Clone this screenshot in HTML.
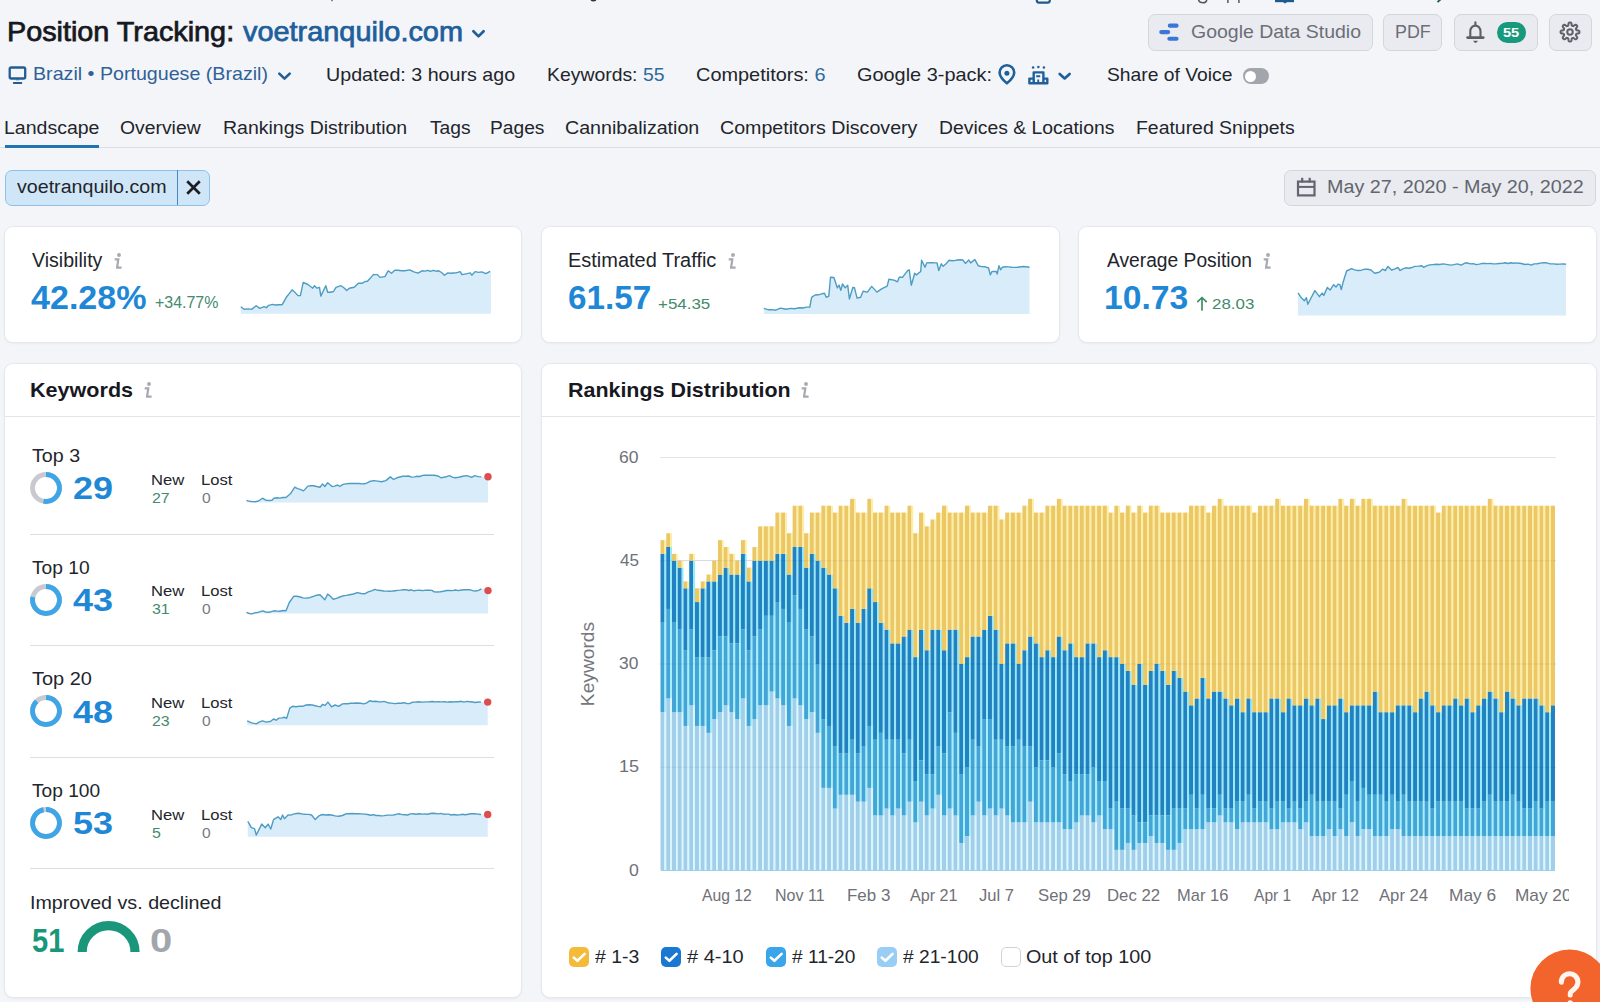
<!DOCTYPE html>
<html><head><meta charset="utf-8"><title>Position Tracking</title>
<style>
html,body{margin:0;padding:0;}
body{width:1600px;height:1002px;overflow:hidden;background:#f4f5f9;position:relative;font-family:"Liberation Sans", sans-serif;}
.t{position:absolute;white-space:nowrap;line-height:1;}
.a{position:absolute;}
.card{position:absolute;background:#fff;border-radius:8px;box-shadow:0 0 0 1px #e6e8ec,0 1px 3px rgba(30,35,50,.10);}
.btn{position:absolute;background:#e9ebf0;border:1px solid #d3d6dd;border-radius:7px;box-sizing:border-box;}
</style></head><body>
<div class="btn" style="left:1148px;top:14px;width:224.5px;height:36.5px;"></div>
<div class="btn" style="left:1383.4px;top:14px;width:59px;height:36.5px;"></div>
<div class="btn" style="left:1453.6px;top:14px;width:84px;height:36.5px;"></div>
<div class="btn" style="left:1548.9px;top:14px;width:43.6px;height:36.5px;"></div>
<div class="a" style="left:0;top:147px;width:1600px;height:1px;background:#dcdee4;"></div>
<div class="a" style="left:4.5px;top:169.5px;width:205px;height:36px;border:1px solid #8fc0e8;border-radius:7px;background:#cfe6f8;box-sizing:border-box;"></div>
<div class="a" style="left:177px;top:170px;width:1.3px;height:35px;background:#4a86bf;"></div>
<div class="btn" style="left:1284px;top:169.5px;width:311.5px;height:36px;"></div>
<div class="card" style="left:4.5px;top:227px;width:516px;height:115px;"></div>
<div class="card" style="left:541.5px;top:227px;width:517px;height:115px;"></div>
<div class="card" style="left:1078.5px;top:227px;width:517px;height:115px;"></div>
<div class="card" style="left:4.5px;top:363.5px;width:516px;height:633px;"></div>
<div class="a" style="left:5px;top:416px;width:515px;height:1px;background:#e3e5ea;"></div>
<div class="a" style="left:30px;top:533.5px;width:464px;height:1.2px;background:#dcdee3;"></div>
<div class="a" style="left:30px;top:645.1px;width:464px;height:1.2px;background:#dcdee3;"></div>
<div class="a" style="left:30px;top:756.7px;width:464px;height:1.2px;background:#dcdee3;"></div>
<div class="a" style="left:30px;top:868.3px;width:464px;height:1.2px;background:#dcdee3;"></div>
<div class="card" style="left:541.5px;top:363.5px;width:1054px;height:633px;"></div>
<div class="a" style="left:542px;top:416px;width:1053px;height:1px;background:#e3e5ea;"></div>
<div class="a" style="left:660px;top:766.7px;width:896px;height:1.2px;background:#e2e4e8;"></div>
<div class="a" style="left:660px;top:663.4px;width:896px;height:1.2px;background:#e2e4e8;"></div>
<div class="a" style="left:660px;top:560.2px;width:896px;height:1.2px;background:#e2e4e8;"></div>
<div class="a" style="left:660px;top:456.9px;width:896px;height:1.2px;background:#e2e4e8;"></div>
<svg class="a" style="left:0;top:0" width="1600" height="1002" viewBox="0 0 1600 1002"><path d="M240.8 306.7 L244.1 309.2 L248.2 308.9 L251.6 309.4 L256.2 305.7 L259.8 308.4 L264.0 306.7 L266.5 307.7 L268.1 305.7 L272.3 304.4 L275.6 305.0 L278.9 304.8 L282.2 304.7 L286.3 297.3 L289.2 293.6 L292.1 289.8 L295.0 292.4 L297.9 295.6 L300.4 295.6 L303.2 282.4 L307.9 284.5 L312.8 288.2 L314.5 285.7 L317.0 288.2 L319.5 287.3 L320.8 296.1 L325.8 285.7 L327.7 292.3 L330.6 292.2 L333.5 291.5 L336.0 287.3 L341.0 285.7 L343.9 287.8 L346.8 290.6 L349.3 288.2 L354.2 287.3 L358.4 283.2 L362.5 283.2 L365.0 281.5 L367.5 281.2 L370.4 278.1 L373.3 274.6 L377.4 274.6 L379.9 277.4 L384.9 276.6 L388.2 270.8 L391.5 273.2 L394.8 270.3 L398.1 270.3 L401.4 270.8 L404.8 270.8 L409.7 269.9 L413.9 271.9 L418.0 273.2 L422.1 270.8 L424.9 271.1 L427.7 270.3 L430.4 271.3 L433.2 270.3 L435.9 271.2 L438.7 270.8 L441.6 272.5 L444.5 275.2 L447.8 272.9 L450.6 273.3 L453.3 273.0 L456.1 272.9 L460.2 271.6 L461.9 274.6 L464.7 274.1 L467.4 273.6 L470.2 272.9 L471.8 275.2 L475.1 271.6 L478.5 272.4 L481.8 271.9 L485.9 273.6 L490.1 271.3 L490.9 271.3 L490.9 313.8 L240.8 313.8 Z" fill="#d9ecfa" stroke="none"/><path d="M240.8 306.7 L244.1 309.2 L248.2 308.9 L251.6 309.4 L256.2 305.7 L259.8 308.4 L264.0 306.7 L266.5 307.7 L268.1 305.7 L272.3 304.4 L275.6 305.0 L278.9 304.8 L282.2 304.7 L286.3 297.3 L289.2 293.6 L292.1 289.8 L295.0 292.4 L297.9 295.6 L300.4 295.6 L303.2 282.4 L307.9 284.5 L312.8 288.2 L314.5 285.7 L317.0 288.2 L319.5 287.3 L320.8 296.1 L325.8 285.7 L327.7 292.3 L330.6 292.2 L333.5 291.5 L336.0 287.3 L341.0 285.7 L343.9 287.8 L346.8 290.6 L349.3 288.2 L354.2 287.3 L358.4 283.2 L362.5 283.2 L365.0 281.5 L367.5 281.2 L370.4 278.1 L373.3 274.6 L377.4 274.6 L379.9 277.4 L384.9 276.6 L388.2 270.8 L391.5 273.2 L394.8 270.3 L398.1 270.3 L401.4 270.8 L404.8 270.8 L409.7 269.9 L413.9 271.9 L418.0 273.2 L422.1 270.8 L424.9 271.1 L427.7 270.3 L430.4 271.3 L433.2 270.3 L435.9 271.2 L438.7 270.8 L441.6 272.5 L444.5 275.2 L447.8 272.9 L450.6 273.3 L453.3 273.0 L456.1 272.9 L460.2 271.6 L461.9 274.6 L464.7 274.1 L467.4 273.6 L470.2 272.9 L471.8 275.2 L475.1 271.6 L478.5 272.4 L481.8 271.9 L485.9 273.6 L490.1 271.3" fill="none" stroke="#4e9cc2" stroke-width="1.4" stroke-linejoin="round"/><path d="M763.8 308.4 L768.6 309.8 L772.0 309.6 L775.5 310.2 L780.6 308.1 L785.8 309.3 L790.9 308.4 L794.4 308.8 L799.5 307.8 L803.0 308.0 L806.4 307.1 L809.8 307.1 L811.6 297.3 L815.0 295.0 L818.4 294.8 L821.9 293.8 L824.5 293.3 L826.2 297.3 L828.8 296.1 L830.5 277.2 L833.9 277.5 L837.3 287.8 L839.1 285.2 L840.8 290.4 L842.5 284.0 L845.1 287.8 L847.7 285.2 L849.4 299.0 L852.8 287.5 L854.5 287.8 L857.1 298.1 L860.6 297.3 L863.1 291.3 L867.4 292.1 L871.7 286.4 L876.9 292.1 L882.0 288.7 L887.2 286.1 L888.9 279.2 L894.1 280.1 L897.5 281.8 L899.2 277.2 L902.7 277.2 L907.8 270.3 L909.2 269.8 L911.3 285.2 L914.7 273.2 L916.4 274.9 L920.7 271.5 L921.6 260.3 L925.0 267.2 L926.7 262.9 L930.2 262.6 L933.6 262.8 L937.0 262.9 L938.8 270.6 L941.3 263.8 L943.1 266.3 L946.1 263.7 L949.1 260.3 L951.8 260.7 L954.6 260.6 L957.3 260.0 L960.1 259.7 L962.8 260.0 L965.4 263.4 L968.8 260.0 L970.6 262.9 L974.9 259.6 L978.3 265.8 L981.7 266.6 L985.2 266.8 L988.6 268.0 L990.3 274.9 L992.0 271.5 L996.3 271.5 L997.2 274.1 L998.9 265.8 L1000.6 269.8 L1002.4 267.2 L1005.4 266.7 L1008.5 266.9 L1011.6 267.3 L1014.7 267.4 L1017.8 267.2 L1023.0 266.5 L1026.2 266.8 L1029.5 267.2 L1029.5 267.2 L1029.5 314.0 L763.8 314.0 Z" fill="#d9ecfa" stroke="none"/><path d="M763.8 308.4 L768.6 309.8 L772.0 309.6 L775.5 310.2 L780.6 308.1 L785.8 309.3 L790.9 308.4 L794.4 308.8 L799.5 307.8 L803.0 308.0 L806.4 307.1 L809.8 307.1 L811.6 297.3 L815.0 295.0 L818.4 294.8 L821.9 293.8 L824.5 293.3 L826.2 297.3 L828.8 296.1 L830.5 277.2 L833.9 277.5 L837.3 287.8 L839.1 285.2 L840.8 290.4 L842.5 284.0 L845.1 287.8 L847.7 285.2 L849.4 299.0 L852.8 287.5 L854.5 287.8 L857.1 298.1 L860.6 297.3 L863.1 291.3 L867.4 292.1 L871.7 286.4 L876.9 292.1 L882.0 288.7 L887.2 286.1 L888.9 279.2 L894.1 280.1 L897.5 281.8 L899.2 277.2 L902.7 277.2 L907.8 270.3 L909.2 269.8 L911.3 285.2 L914.7 273.2 L916.4 274.9 L920.7 271.5 L921.6 260.3 L925.0 267.2 L926.7 262.9 L930.2 262.6 L933.6 262.8 L937.0 262.9 L938.8 270.6 L941.3 263.8 L943.1 266.3 L946.1 263.7 L949.1 260.3 L951.8 260.7 L954.6 260.6 L957.3 260.0 L960.1 259.7 L962.8 260.0 L965.4 263.4 L968.8 260.0 L970.6 262.9 L974.9 259.6 L978.3 265.8 L981.7 266.6 L985.2 266.8 L988.6 268.0 L990.3 274.9 L992.0 271.5 L996.3 271.5 L997.2 274.1 L998.9 265.8 L1000.6 269.8 L1002.4 267.2 L1005.4 266.7 L1008.5 266.9 L1011.6 267.3 L1014.7 267.4 L1017.8 267.2 L1023.0 266.5 L1026.2 266.8 L1029.5 267.2" fill="none" stroke="#4e9cc2" stroke-width="1.4" stroke-linejoin="round"/><path d="M1298.0 292.8 L1301.6 298.1 L1304.3 300.8 L1306.4 297.7 L1307.8 304.3 L1311.4 297.2 L1314.9 290.6 L1319.4 296.7 L1322.1 293.1 L1323.8 295.4 L1327.4 287.4 L1330.1 290.1 L1333.6 284.7 L1336.0 287.1 L1338.1 284.2 L1339.9 284.7 L1341.3 289.5 L1343.4 281.2 L1346.6 271.0 L1351.5 268.7 L1354.6 269.9 L1357.7 270.5 L1361.3 270.2 L1364.8 269.2 L1367.9 269.2 L1371.0 270.0 L1374.6 273.2 L1379.1 272.3 L1382.6 269.2 L1385.3 270.5 L1388.0 266.4 L1391.5 270.0 L1394.6 269.1 L1397.8 267.5 L1400.1 270.5 L1402.9 268.8 L1405.8 267.8 L1408.5 268.3 L1411.1 267.8 L1414.7 266.4 L1418.3 266.1 L1421.8 265.7 L1423.6 267.3 L1427.2 265.7 L1429.8 264.9 L1432.5 264.6 L1436.1 264.3 L1439.6 264.5 L1443.2 263.9 L1447.6 264.6 L1450.8 265.1 L1453.9 264.6 L1457.4 263.9 L1461.0 265.1 L1465.5 262.8 L1468.1 263.2 L1470.8 263.9 L1473.5 263.7 L1476.1 264.6 L1479.3 264.1 L1482.4 263.4 L1485.0 263.5 L1487.7 263.6 L1490.4 263.4 L1493.1 263.9 L1496.0 263.9 L1499.0 263.5 L1502.0 263.4 L1504.9 262.7 L1507.9 263.5 L1510.9 262.8 L1513.5 263.2 L1516.2 262.9 L1518.9 263.2 L1521.6 263.5 L1524.8 264.5 L1528.1 264.1 L1531.4 265.1 L1534.0 263.9 L1537.1 263.7 L1540.3 263.1 L1543.4 262.7 L1546.5 262.8 L1550.1 263.9 L1553.6 263.9 L1556.7 264.3 L1559.9 264.1 L1563.0 263.9 L1566.1 264.3 L1566.0 264.3 L1566.0 315.5 L1298.0 315.5 Z" fill="#d9ecfa" stroke="none"/><path d="M1298.0 292.8 L1301.6 298.1 L1304.3 300.8 L1306.4 297.7 L1307.8 304.3 L1311.4 297.2 L1314.9 290.6 L1319.4 296.7 L1322.1 293.1 L1323.8 295.4 L1327.4 287.4 L1330.1 290.1 L1333.6 284.7 L1336.0 287.1 L1338.1 284.2 L1339.9 284.7 L1341.3 289.5 L1343.4 281.2 L1346.6 271.0 L1351.5 268.7 L1354.6 269.9 L1357.7 270.5 L1361.3 270.2 L1364.8 269.2 L1367.9 269.2 L1371.0 270.0 L1374.6 273.2 L1379.1 272.3 L1382.6 269.2 L1385.3 270.5 L1388.0 266.4 L1391.5 270.0 L1394.6 269.1 L1397.8 267.5 L1400.1 270.5 L1402.9 268.8 L1405.8 267.8 L1408.5 268.3 L1411.1 267.8 L1414.7 266.4 L1418.3 266.1 L1421.8 265.7 L1423.6 267.3 L1427.2 265.7 L1429.8 264.9 L1432.5 264.6 L1436.1 264.3 L1439.6 264.5 L1443.2 263.9 L1447.6 264.6 L1450.8 265.1 L1453.9 264.6 L1457.4 263.9 L1461.0 265.1 L1465.5 262.8 L1468.1 263.2 L1470.8 263.9 L1473.5 263.7 L1476.1 264.6 L1479.3 264.1 L1482.4 263.4 L1485.0 263.5 L1487.7 263.6 L1490.4 263.4 L1493.1 263.9 L1496.0 263.9 L1499.0 263.5 L1502.0 263.4 L1504.9 262.7 L1507.9 263.5 L1510.9 262.8 L1513.5 263.2 L1516.2 262.9 L1518.9 263.2 L1521.6 263.5 L1524.8 264.5 L1528.1 264.1 L1531.4 265.1 L1534.0 263.9 L1537.1 263.7 L1540.3 263.1 L1543.4 262.7 L1546.5 262.8 L1550.1 263.9 L1553.6 263.9 L1556.7 264.3 L1559.9 264.1 L1563.0 263.9 L1566.1 264.3" fill="none" stroke="#4e9cc2" stroke-width="1.4" stroke-linejoin="round"/><path d="M246.5 500.4 L249.2 501.2 L252.0 501.5 L255.2 501.7 L258.5 501.0 L262.5 498.2 L266.2 500.4 L269.0 500.5 L271.7 500.4 L273.9 498.2 L276.9 497.7 L279.9 498.1 L283.0 497.5 L286.0 497.5 L290.4 493.8 L294.8 487.2 L297.5 488.6 L300.3 489.4 L303.5 490.9 L307.9 486.1 L310.7 485.7 L313.4 485.7 L316.7 486.5 L320.0 487.2 L322.6 483.9 L324.8 486.5 L327.7 482.8 L332.1 486.5 L334.8 486.1 L337.6 485.0 L339.8 486.5 L342.5 484.7 L345.3 483.9 L349.1 483.5 L352.9 483.5 L355.9 483.5 L358.8 483.5 L361.7 483.9 L364.5 483.8 L367.2 482.8 L370.5 481.2 L373.8 480.6 L377.6 481.1 L381.5 481.7 L385.9 480.6 L390.3 476.9 L393.6 479.5 L396.8 477.8 L399.8 477.0 L402.7 476.3 L405.6 476.2 L408.6 476.0 L411.5 477.1 L414.4 476.9 L417.2 476.3 L419.9 476.5 L422.6 475.4 L425.4 475.1 L428.0 475.2 L430.7 475.2 L433.3 475.3 L435.9 475.5 L438.6 476.2 L440.8 477.8 L443.7 477.3 L446.6 476.7 L449.5 475.6 L452.3 477.1 L455.0 477.8 L458.9 477.2 L462.7 476.2 L467.1 475.6 L471.5 477.3 L474.8 475.6 L478.1 476.6 L481.4 476.9 L488.0 476.9 L488.0 502.6 L246.5 502.6 Z" fill="#d9ecfa" stroke="none"/><path d="M246.5 500.4 L249.2 501.2 L252.0 501.5 L255.2 501.7 L258.5 501.0 L262.5 498.2 L266.2 500.4 L269.0 500.5 L271.7 500.4 L273.9 498.2 L276.9 497.7 L279.9 498.1 L283.0 497.5 L286.0 497.5 L290.4 493.8 L294.8 487.2 L297.5 488.6 L300.3 489.4 L303.5 490.9 L307.9 486.1 L310.7 485.7 L313.4 485.7 L316.7 486.5 L320.0 487.2 L322.6 483.9 L324.8 486.5 L327.7 482.8 L332.1 486.5 L334.8 486.1 L337.6 485.0 L339.8 486.5 L342.5 484.7 L345.3 483.9 L349.1 483.5 L352.9 483.5 L355.9 483.5 L358.8 483.5 L361.7 483.9 L364.5 483.8 L367.2 482.8 L370.5 481.2 L373.8 480.6 L377.6 481.1 L381.5 481.7 L385.9 480.6 L390.3 476.9 L393.6 479.5 L396.8 477.8 L399.8 477.0 L402.7 476.3 L405.6 476.2 L408.6 476.0 L411.5 477.1 L414.4 476.9 L417.2 476.3 L419.9 476.5 L422.6 475.4 L425.4 475.1 L428.0 475.2 L430.7 475.2 L433.3 475.3 L435.9 475.5 L438.6 476.2 L440.8 477.8 L443.7 477.3 L446.6 476.7 L449.5 475.6 L452.3 477.1 L455.0 477.8 L458.9 477.2 L462.7 476.2 L467.1 475.6 L471.5 477.3 L474.8 475.6 L478.1 476.6 L481.4 476.9" fill="none" stroke="#4e9cc2" stroke-width="1.4" stroke-linejoin="round"/><circle cx="488.0" cy="476.7" r="3.7" fill="#dc4d4d"/><path d="M246.5 612.3 L249.2 613.5 L252.0 613.9 L254.7 612.8 L257.4 612.6 L260.2 611.7 L262.9 610.8 L265.7 612.0 L268.4 612.3 L271.2 611.7 L273.9 610.8 L276.9 611.1 L279.9 611.3 L283.0 610.5 L286.0 610.8 L289.3 602.5 L293.7 596.3 L297.0 596.2 L300.3 597.0 L303.0 597.9 L305.7 598.1 L309.6 597.7 L313.4 596.3 L316.7 595.2 L320.0 594.8 L324.8 599.8 L327.7 594.1 L330.4 596.2 L333.2 599.2 L336.5 598.4 L339.8 597.0 L343.1 595.8 L346.4 595.4 L349.6 594.8 L353.5 594.0 L357.3 592.6 L361.2 593.5 L365.0 593.7 L368.3 591.9 L371.6 590.9 L374.9 589.3 L377.8 590.3 L380.8 590.5 L383.7 591.0 L386.6 591.1 L389.5 591.2 L392.5 591.0 L395.2 590.7 L397.9 590.4 L400.7 590.1 L403.4 589.7 L406.1 589.7 L408.7 590.5 L411.3 589.8 L414.0 590.8 L416.6 590.4 L419.7 590.2 L422.8 590.6 L425.8 590.1 L428.9 590.2 L432.0 590.4 L434.2 591.9 L437.2 592.0 L440.3 591.7 L443.4 591.2 L446.5 590.5 L449.5 590.4 L452.5 590.6 L455.4 590.0 L458.3 590.6 L461.2 590.0 L464.2 589.7 L467.1 589.7 L470.0 589.8 L473.0 590.7 L475.9 591.0 L478.6 590.4 L481.4 588.8 L488.0 588.8 L488.0 613.4 L246.5 613.4 Z" fill="#d9ecfa" stroke="none"/><path d="M246.5 612.3 L249.2 613.5 L252.0 613.9 L254.7 612.8 L257.4 612.6 L260.2 611.7 L262.9 610.8 L265.7 612.0 L268.4 612.3 L271.2 611.7 L273.9 610.8 L276.9 611.1 L279.9 611.3 L283.0 610.5 L286.0 610.8 L289.3 602.5 L293.7 596.3 L297.0 596.2 L300.3 597.0 L303.0 597.9 L305.7 598.1 L309.6 597.7 L313.4 596.3 L316.7 595.2 L320.0 594.8 L324.8 599.8 L327.7 594.1 L330.4 596.2 L333.2 599.2 L336.5 598.4 L339.8 597.0 L343.1 595.8 L346.4 595.4 L349.6 594.8 L353.5 594.0 L357.3 592.6 L361.2 593.5 L365.0 593.7 L368.3 591.9 L371.6 590.9 L374.9 589.3 L377.8 590.3 L380.8 590.5 L383.7 591.0 L386.6 591.1 L389.5 591.2 L392.5 591.0 L395.2 590.7 L397.9 590.4 L400.7 590.1 L403.4 589.7 L406.1 589.7 L408.7 590.5 L411.3 589.8 L414.0 590.8 L416.6 590.4 L419.7 590.2 L422.8 590.6 L425.8 590.1 L428.9 590.2 L432.0 590.4 L434.2 591.9 L437.2 592.0 L440.3 591.7 L443.4 591.2 L446.5 590.5 L449.5 590.4 L452.5 590.6 L455.4 590.0 L458.3 590.6 L461.2 590.0 L464.2 589.7 L467.1 589.7 L470.0 589.8 L473.0 590.7 L475.9 591.0 L478.6 590.4 L481.4 588.8" fill="none" stroke="#4e9cc2" stroke-width="1.4" stroke-linejoin="round"/><circle cx="488.0" cy="590.6" r="3.7" fill="#dc4d4d"/><path d="M247.2 720.8 L249.9 722.2 L252.7 723.1 L256.3 723.9 L259.5 721.9 L262.6 720.8 L266.3 722.1 L270.8 721.3 L273.5 719.0 L276.2 720.2 L278.9 718.1 L281.7 717.9 L284.4 717.2 L286.6 718.4 L289.8 708.1 L292.5 706.3 L295.9 706.7 L299.2 706.2 L302.5 706.3 L306.1 705.0 L309.1 704.8 L312.2 705.0 L315.2 705.7 L317.9 706.4 L320.6 706.8 L322.4 704.5 L325.2 705.4 L327.9 702.1 L331.5 706.8 L335.1 705.0 L338.8 706.3 L342.4 703.9 L345.1 703.7 L347.8 703.7 L350.5 703.2 L353.3 703.2 L356.9 703.0 L360.5 703.2 L364.1 703.9 L366.8 702.9 L369.6 700.8 L372.6 701.5 L375.6 701.2 L378.6 701.8 L381.4 701.9 L384.1 701.4 L387.7 702.7 L391.3 703.1 L394.9 703.6 L398.0 703.2 L401.0 703.3 L404.0 702.7 L406.7 703.5 L409.4 703.6 L412.2 702.3 L414.9 702.1 L418.5 701.7 L422.1 702.1 L425.8 701.9 L429.4 701.8 L432.4 701.5 L435.4 701.9 L438.4 701.6 L441.5 701.9 L444.5 701.8 L447.5 702.1 L450.2 701.7 L452.9 702.0 L455.7 701.6 L458.4 701.8 L461.2 701.3 L464.0 702.1 L466.9 701.4 L469.7 701.7 L472.5 702.0 L475.4 702.5 L478.2 702.0 L481.0 702.1 L487.7 702.1 L487.7 725.3 L247.2 725.3 Z" fill="#d9ecfa" stroke="none"/><path d="M247.2 720.8 L249.9 722.2 L252.7 723.1 L256.3 723.9 L259.5 721.9 L262.6 720.8 L266.3 722.1 L270.8 721.3 L273.5 719.0 L276.2 720.2 L278.9 718.1 L281.7 717.9 L284.4 717.2 L286.6 718.4 L289.8 708.1 L292.5 706.3 L295.9 706.7 L299.2 706.2 L302.5 706.3 L306.1 705.0 L309.1 704.8 L312.2 705.0 L315.2 705.7 L317.9 706.4 L320.6 706.8 L322.4 704.5 L325.2 705.4 L327.9 702.1 L331.5 706.8 L335.1 705.0 L338.8 706.3 L342.4 703.9 L345.1 703.7 L347.8 703.7 L350.5 703.2 L353.3 703.2 L356.9 703.0 L360.5 703.2 L364.1 703.9 L366.8 702.9 L369.6 700.8 L372.6 701.5 L375.6 701.2 L378.6 701.8 L381.4 701.9 L384.1 701.4 L387.7 702.7 L391.3 703.1 L394.9 703.6 L398.0 703.2 L401.0 703.3 L404.0 702.7 L406.7 703.5 L409.4 703.6 L412.2 702.3 L414.9 702.1 L418.5 701.7 L422.1 702.1 L425.8 701.9 L429.4 701.8 L432.4 701.5 L435.4 701.9 L438.4 701.6 L441.5 701.9 L444.5 701.8 L447.5 702.1 L450.2 701.7 L452.9 702.0 L455.7 701.6 L458.4 701.8 L461.2 701.3 L464.0 702.1 L466.9 701.4 L469.7 701.7 L472.5 702.0 L475.4 702.5 L478.2 702.0 L481.0 702.1" fill="none" stroke="#4e9cc2" stroke-width="1.4" stroke-linejoin="round"/><circle cx="487.7" cy="702.1" r="3.7" fill="#dc4d4d"/><path d="M247.8 821.4 L251.4 827.7 L254.5 828.6 L256.3 835.0 L259.0 829.6 L261.7 824.1 L265.3 827.7 L268.1 824.1 L270.8 829.0 L273.5 819.6 L278.0 816.8 L280.8 819.6 L282.6 815.0 L284.4 818.7 L288.0 815.0 L290.7 815.1 L293.4 814.1 L296.2 813.5 L298.9 813.2 L302.5 814.1 L305.5 814.3 L308.5 814.4 L311.6 815.0 L315.2 819.6 L318.8 815.9 L322.4 814.5 L325.5 815.0 L328.5 814.7 L331.5 815.0 L335.1 815.9 L338.8 816.3 L342.4 815.5 L346.0 813.8 L349.0 813.8 L352.0 813.5 L355.1 813.8 L358.2 813.8 L361.4 813.9 L364.6 814.1 L367.8 814.5 L370.5 815.2 L373.2 814.7 L375.9 815.5 L378.6 815.5 L381.4 815.9 L384.1 815.6 L387.2 815.1 L390.4 815.1 L393.6 815.0 L396.8 814.1 L399.5 813.8 L402.2 814.6 L404.9 814.8 L407.6 815.0 L410.4 813.9 L413.1 813.8 L416.1 814.3 L419.1 813.7 L422.1 814.1 L424.9 813.9 L427.6 814.2 L430.3 813.5 L433.0 813.2 L435.6 813.5 L438.2 813.9 L440.9 813.4 L443.5 814.2 L446.1 814.1 L448.7 814.1 L451.3 815.0 L454.0 814.5 L456.6 815.0 L459.5 814.9 L462.4 814.3 L465.3 814.7 L468.2 814.2 L471.1 813.8 L474.4 813.7 L477.7 814.1 L481.0 814.5 L487.7 814.5 L487.7 836.8 L247.8 836.8 Z" fill="#d9ecfa" stroke="none"/><path d="M247.8 821.4 L251.4 827.7 L254.5 828.6 L256.3 835.0 L259.0 829.6 L261.7 824.1 L265.3 827.7 L268.1 824.1 L270.8 829.0 L273.5 819.6 L278.0 816.8 L280.8 819.6 L282.6 815.0 L284.4 818.7 L288.0 815.0 L290.7 815.1 L293.4 814.1 L296.2 813.5 L298.9 813.2 L302.5 814.1 L305.5 814.3 L308.5 814.4 L311.6 815.0 L315.2 819.6 L318.8 815.9 L322.4 814.5 L325.5 815.0 L328.5 814.7 L331.5 815.0 L335.1 815.9 L338.8 816.3 L342.4 815.5 L346.0 813.8 L349.0 813.8 L352.0 813.5 L355.1 813.8 L358.2 813.8 L361.4 813.9 L364.6 814.1 L367.8 814.5 L370.5 815.2 L373.2 814.7 L375.9 815.5 L378.6 815.5 L381.4 815.9 L384.1 815.6 L387.2 815.1 L390.4 815.1 L393.6 815.0 L396.8 814.1 L399.5 813.8 L402.2 814.6 L404.9 814.8 L407.6 815.0 L410.4 813.9 L413.1 813.8 L416.1 814.3 L419.1 813.7 L422.1 814.1 L424.9 813.9 L427.6 814.2 L430.3 813.5 L433.0 813.2 L435.6 813.5 L438.2 813.9 L440.9 813.4 L443.5 814.2 L446.1 814.1 L448.7 814.1 L451.3 815.0 L454.0 814.5 L456.6 815.0 L459.5 814.9 L462.4 814.3 L465.3 814.7 L468.2 814.2 L471.1 813.8 L474.4 813.7 L477.7 814.1 L481.0 814.5" fill="none" stroke="#4e9cc2" stroke-width="1.4" stroke-linejoin="round"/><circle cx="487.7" cy="814.5" r="3.7" fill="#dc4d4d"/><rect x="660.50" y="712.19" width="4.0" height="158.31" fill="#a2cee9"/><rect x="664.50" y="712.19" width="1.745" height="158.31" fill="#d6f8ff"/><rect x="660.50" y="622.71" width="4.0" height="89.48" fill="#43a5d6"/><rect x="664.50" y="622.71" width="1.745" height="89.48" fill="#a2f0ff"/><rect x="660.50" y="553.88" width="4.0" height="68.83" fill="#2181c1"/><rect x="664.50" y="553.88" width="1.745" height="68.83" fill="#90ecfc"/><rect x="660.50" y="540.12" width="4.0" height="13.77" fill="#ebc766"/><rect x="664.50" y="540.12" width="1.745" height="13.77" fill="#fdeea0"/><rect x="666.25" y="698.42" width="4.0" height="172.08" fill="#a2cee9"/><rect x="670.25" y="698.42" width="1.745" height="172.08" fill="#d6f8ff"/><rect x="666.25" y="608.95" width="4.0" height="89.48" fill="#43a5d6"/><rect x="670.25" y="608.95" width="1.745" height="89.48" fill="#a2f0ff"/><rect x="666.25" y="547.00" width="4.0" height="61.95" fill="#2181c1"/><rect x="670.25" y="547.00" width="1.745" height="61.95" fill="#90ecfc"/><rect x="666.25" y="533.23" width="4.0" height="13.77" fill="#ebc766"/><rect x="670.25" y="533.23" width="1.745" height="13.77" fill="#fdeea0"/><rect x="671.99" y="712.19" width="4.0" height="158.31" fill="#a2cee9"/><rect x="675.99" y="712.19" width="1.745" height="158.31" fill="#d6f8ff"/><rect x="671.99" y="622.71" width="4.0" height="89.48" fill="#43a5d6"/><rect x="675.99" y="622.71" width="1.745" height="89.48" fill="#a2f0ff"/><rect x="671.99" y="560.76" width="4.0" height="61.95" fill="#2181c1"/><rect x="675.99" y="560.76" width="1.745" height="61.95" fill="#90ecfc"/><rect x="671.99" y="553.88" width="4.0" height="6.88" fill="#ebc766"/><rect x="675.99" y="553.88" width="1.745" height="6.88" fill="#fdeea0"/><rect x="677.74" y="712.19" width="4.0" height="158.31" fill="#a2cee9"/><rect x="681.74" y="712.19" width="1.745" height="158.31" fill="#d6f8ff"/><rect x="677.74" y="629.60" width="4.0" height="82.60" fill="#43a5d6"/><rect x="681.74" y="629.60" width="1.745" height="82.60" fill="#a2f0ff"/><rect x="677.74" y="567.65" width="4.0" height="61.95" fill="#2181c1"/><rect x="681.74" y="567.65" width="1.745" height="61.95" fill="#90ecfc"/><rect x="677.74" y="560.76" width="4.0" height="6.88" fill="#ebc766"/><rect x="681.74" y="560.76" width="1.745" height="6.88" fill="#fdeea0"/><rect x="683.48" y="725.96" width="4.0" height="144.54" fill="#a2cee9"/><rect x="687.48" y="725.96" width="1.745" height="144.54" fill="#d6f8ff"/><rect x="683.48" y="650.24" width="4.0" height="75.71" fill="#43a5d6"/><rect x="687.48" y="650.24" width="1.745" height="75.71" fill="#a2f0ff"/><rect x="683.48" y="588.30" width="4.0" height="61.95" fill="#2181c1"/><rect x="687.48" y="588.30" width="1.745" height="61.95" fill="#90ecfc"/><rect x="683.48" y="581.41" width="4.0" height="6.88" fill="#ebc766"/><rect x="687.48" y="581.41" width="1.745" height="6.88" fill="#fdeea0"/><rect x="689.23" y="705.31" width="4.0" height="165.19" fill="#a2cee9"/><rect x="693.23" y="705.31" width="1.745" height="165.19" fill="#d6f8ff"/><rect x="689.23" y="629.60" width="4.0" height="75.71" fill="#43a5d6"/><rect x="693.23" y="629.60" width="1.745" height="75.71" fill="#a2f0ff"/><rect x="689.23" y="560.76" width="4.0" height="68.83" fill="#2181c1"/><rect x="693.23" y="560.76" width="1.745" height="68.83" fill="#90ecfc"/><rect x="689.23" y="553.88" width="4.0" height="6.88" fill="#ebc766"/><rect x="693.23" y="553.88" width="1.745" height="6.88" fill="#fdeea0"/><rect x="694.97" y="725.96" width="4.0" height="144.54" fill="#a2cee9"/><rect x="698.97" y="725.96" width="1.745" height="144.54" fill="#d6f8ff"/><rect x="694.97" y="657.13" width="4.0" height="68.83" fill="#43a5d6"/><rect x="698.97" y="657.13" width="1.745" height="68.83" fill="#a2f0ff"/><rect x="694.97" y="602.06" width="4.0" height="55.06" fill="#2181c1"/><rect x="698.97" y="602.06" width="1.745" height="55.06" fill="#90ecfc"/><rect x="694.97" y="588.30" width="4.0" height="13.77" fill="#ebc766"/><rect x="698.97" y="588.30" width="1.745" height="13.77" fill="#fdeea0"/><rect x="700.72" y="725.96" width="4.0" height="144.54" fill="#a2cee9"/><rect x="704.72" y="725.96" width="1.745" height="144.54" fill="#d6f8ff"/><rect x="700.72" y="657.13" width="4.0" height="68.83" fill="#43a5d6"/><rect x="704.72" y="657.13" width="1.745" height="68.83" fill="#a2f0ff"/><rect x="700.72" y="588.30" width="4.0" height="68.83" fill="#2181c1"/><rect x="704.72" y="588.30" width="1.745" height="68.83" fill="#90ecfc"/><rect x="700.72" y="581.41" width="4.0" height="6.88" fill="#ebc766"/><rect x="704.72" y="581.41" width="1.745" height="6.88" fill="#fdeea0"/><rect x="706.46" y="732.84" width="4.0" height="137.66" fill="#a2cee9"/><rect x="710.46" y="732.84" width="1.745" height="137.66" fill="#d6f8ff"/><rect x="706.46" y="657.13" width="4.0" height="75.71" fill="#43a5d6"/><rect x="710.46" y="657.13" width="1.745" height="75.71" fill="#a2f0ff"/><rect x="706.46" y="581.41" width="4.0" height="75.71" fill="#2181c1"/><rect x="710.46" y="581.41" width="1.745" height="75.71" fill="#90ecfc"/><rect x="706.46" y="574.53" width="4.0" height="6.88" fill="#ebc766"/><rect x="710.46" y="574.53" width="1.745" height="6.88" fill="#fdeea0"/><rect x="712.21" y="719.07" width="4.0" height="151.43" fill="#a2cee9"/><rect x="716.21" y="719.07" width="1.745" height="151.43" fill="#d6f8ff"/><rect x="712.21" y="650.24" width="4.0" height="68.83" fill="#43a5d6"/><rect x="716.21" y="650.24" width="1.745" height="68.83" fill="#a2f0ff"/><rect x="712.21" y="581.41" width="4.0" height="68.83" fill="#2181c1"/><rect x="716.21" y="581.41" width="1.745" height="68.83" fill="#90ecfc"/><rect x="712.21" y="560.76" width="4.0" height="20.65" fill="#ebc766"/><rect x="716.21" y="560.76" width="1.745" height="20.65" fill="#fdeea0"/><rect x="717.95" y="712.19" width="4.0" height="158.31" fill="#a2cee9"/><rect x="721.95" y="712.19" width="1.745" height="158.31" fill="#d6f8ff"/><rect x="717.95" y="636.48" width="4.0" height="75.71" fill="#43a5d6"/><rect x="721.95" y="636.48" width="1.745" height="75.71" fill="#a2f0ff"/><rect x="717.95" y="574.53" width="4.0" height="61.95" fill="#2181c1"/><rect x="721.95" y="574.53" width="1.745" height="61.95" fill="#90ecfc"/><rect x="717.95" y="540.12" width="4.0" height="34.41" fill="#ebc766"/><rect x="721.95" y="540.12" width="1.745" height="34.41" fill="#fdeea0"/><rect x="723.70" y="705.31" width="4.0" height="165.19" fill="#a2cee9"/><rect x="727.70" y="705.31" width="1.745" height="165.19" fill="#d6f8ff"/><rect x="723.70" y="636.48" width="4.0" height="68.83" fill="#43a5d6"/><rect x="727.70" y="636.48" width="1.745" height="68.83" fill="#a2f0ff"/><rect x="723.70" y="567.65" width="4.0" height="68.83" fill="#2181c1"/><rect x="727.70" y="567.65" width="1.745" height="68.83" fill="#90ecfc"/><rect x="723.70" y="547.00" width="4.0" height="20.65" fill="#ebc766"/><rect x="727.70" y="547.00" width="1.745" height="20.65" fill="#fdeea0"/><rect x="729.44" y="712.19" width="4.0" height="158.31" fill="#a2cee9"/><rect x="733.44" y="712.19" width="1.745" height="158.31" fill="#d6f8ff"/><rect x="729.44" y="643.36" width="4.0" height="68.83" fill="#43a5d6"/><rect x="733.44" y="643.36" width="1.745" height="68.83" fill="#a2f0ff"/><rect x="729.44" y="574.53" width="4.0" height="68.83" fill="#2181c1"/><rect x="733.44" y="574.53" width="1.745" height="68.83" fill="#90ecfc"/><rect x="729.44" y="553.88" width="4.0" height="20.65" fill="#ebc766"/><rect x="733.44" y="553.88" width="1.745" height="20.65" fill="#fdeea0"/><rect x="735.18" y="719.07" width="4.0" height="151.43" fill="#a2cee9"/><rect x="739.18" y="719.07" width="1.745" height="151.43" fill="#d6f8ff"/><rect x="735.18" y="643.36" width="4.0" height="75.71" fill="#43a5d6"/><rect x="739.18" y="643.36" width="1.745" height="75.71" fill="#a2f0ff"/><rect x="735.18" y="574.53" width="4.0" height="68.83" fill="#2181c1"/><rect x="739.18" y="574.53" width="1.745" height="68.83" fill="#90ecfc"/><rect x="735.18" y="560.76" width="4.0" height="13.77" fill="#ebc766"/><rect x="739.18" y="560.76" width="1.745" height="13.77" fill="#fdeea0"/><rect x="740.93" y="698.42" width="4.0" height="172.08" fill="#a2cee9"/><rect x="744.93" y="698.42" width="1.745" height="172.08" fill="#d6f8ff"/><rect x="740.93" y="629.60" width="4.0" height="68.83" fill="#43a5d6"/><rect x="744.93" y="629.60" width="1.745" height="68.83" fill="#a2f0ff"/><rect x="740.93" y="553.88" width="4.0" height="75.71" fill="#2181c1"/><rect x="744.93" y="553.88" width="1.745" height="75.71" fill="#90ecfc"/><rect x="740.93" y="540.12" width="4.0" height="13.77" fill="#ebc766"/><rect x="744.93" y="540.12" width="1.745" height="13.77" fill="#fdeea0"/><rect x="746.67" y="725.96" width="4.0" height="144.54" fill="#a2cee9"/><rect x="750.67" y="725.96" width="1.745" height="144.54" fill="#d6f8ff"/><rect x="746.67" y="650.24" width="4.0" height="75.71" fill="#43a5d6"/><rect x="750.67" y="650.24" width="1.745" height="75.71" fill="#a2f0ff"/><rect x="746.67" y="581.41" width="4.0" height="68.83" fill="#2181c1"/><rect x="750.67" y="581.41" width="1.745" height="68.83" fill="#90ecfc"/><rect x="746.67" y="567.65" width="4.0" height="13.77" fill="#ebc766"/><rect x="750.67" y="567.65" width="1.745" height="13.77" fill="#fdeea0"/><rect x="752.42" y="719.07" width="4.0" height="151.43" fill="#a2cee9"/><rect x="756.42" y="719.07" width="1.745" height="151.43" fill="#d6f8ff"/><rect x="752.42" y="636.48" width="4.0" height="82.60" fill="#43a5d6"/><rect x="756.42" y="636.48" width="1.745" height="82.60" fill="#a2f0ff"/><rect x="752.42" y="560.76" width="4.0" height="75.71" fill="#2181c1"/><rect x="756.42" y="560.76" width="1.745" height="75.71" fill="#90ecfc"/><rect x="752.42" y="547.00" width="4.0" height="13.77" fill="#ebc766"/><rect x="756.42" y="547.00" width="1.745" height="13.77" fill="#fdeea0"/><rect x="758.16" y="705.31" width="4.0" height="165.19" fill="#a2cee9"/><rect x="762.16" y="705.31" width="1.745" height="165.19" fill="#d6f8ff"/><rect x="758.16" y="629.60" width="4.0" height="75.71" fill="#43a5d6"/><rect x="762.16" y="629.60" width="1.745" height="75.71" fill="#a2f0ff"/><rect x="758.16" y="560.76" width="4.0" height="68.83" fill="#2181c1"/><rect x="762.16" y="560.76" width="1.745" height="68.83" fill="#90ecfc"/><rect x="758.16" y="526.35" width="4.0" height="34.41" fill="#ebc766"/><rect x="762.16" y="526.35" width="1.745" height="34.41" fill="#fdeea0"/><rect x="763.91" y="705.31" width="4.0" height="165.19" fill="#a2cee9"/><rect x="767.91" y="705.31" width="1.745" height="165.19" fill="#d6f8ff"/><rect x="763.91" y="615.83" width="4.0" height="89.48" fill="#43a5d6"/><rect x="767.91" y="615.83" width="1.745" height="89.48" fill="#a2f0ff"/><rect x="763.91" y="560.76" width="4.0" height="55.06" fill="#2181c1"/><rect x="767.91" y="560.76" width="1.745" height="55.06" fill="#90ecfc"/><rect x="763.91" y="526.35" width="4.0" height="34.41" fill="#ebc766"/><rect x="767.91" y="526.35" width="1.745" height="34.41" fill="#fdeea0"/><rect x="769.65" y="691.54" width="4.0" height="178.96" fill="#a2cee9"/><rect x="773.65" y="691.54" width="1.745" height="178.96" fill="#d6f8ff"/><rect x="769.65" y="615.83" width="4.0" height="75.71" fill="#43a5d6"/><rect x="773.65" y="615.83" width="1.745" height="75.71" fill="#a2f0ff"/><rect x="769.65" y="560.76" width="4.0" height="55.06" fill="#2181c1"/><rect x="773.65" y="560.76" width="1.745" height="55.06" fill="#90ecfc"/><rect x="769.65" y="526.35" width="4.0" height="34.41" fill="#ebc766"/><rect x="773.65" y="526.35" width="1.745" height="34.41" fill="#fdeea0"/><rect x="775.40" y="698.42" width="4.0" height="172.08" fill="#a2cee9"/><rect x="779.40" y="698.42" width="1.745" height="172.08" fill="#d6f8ff"/><rect x="775.40" y="602.06" width="4.0" height="96.36" fill="#43a5d6"/><rect x="779.40" y="602.06" width="1.745" height="96.36" fill="#a2f0ff"/><rect x="775.40" y="553.88" width="4.0" height="48.18" fill="#2181c1"/><rect x="779.40" y="553.88" width="1.745" height="48.18" fill="#90ecfc"/><rect x="775.40" y="512.58" width="4.0" height="41.30" fill="#ebc766"/><rect x="779.40" y="512.58" width="1.745" height="41.30" fill="#fdeea0"/><rect x="781.14" y="705.31" width="4.0" height="165.19" fill="#a2cee9"/><rect x="785.14" y="705.31" width="1.745" height="165.19" fill="#d6f8ff"/><rect x="781.14" y="608.95" width="4.0" height="96.36" fill="#43a5d6"/><rect x="785.14" y="608.95" width="1.745" height="96.36" fill="#a2f0ff"/><rect x="781.14" y="553.88" width="4.0" height="55.06" fill="#2181c1"/><rect x="785.14" y="553.88" width="1.745" height="55.06" fill="#90ecfc"/><rect x="781.14" y="512.58" width="4.0" height="41.30" fill="#ebc766"/><rect x="785.14" y="512.58" width="1.745" height="41.30" fill="#fdeea0"/><rect x="786.89" y="725.96" width="4.0" height="144.54" fill="#a2cee9"/><rect x="790.89" y="725.96" width="1.745" height="144.54" fill="#d6f8ff"/><rect x="786.89" y="622.71" width="4.0" height="103.25" fill="#43a5d6"/><rect x="790.89" y="622.71" width="1.745" height="103.25" fill="#a2f0ff"/><rect x="786.89" y="574.53" width="4.0" height="48.18" fill="#2181c1"/><rect x="790.89" y="574.53" width="1.745" height="48.18" fill="#90ecfc"/><rect x="786.89" y="533.23" width="4.0" height="41.30" fill="#ebc766"/><rect x="790.89" y="533.23" width="1.745" height="41.30" fill="#fdeea0"/><rect x="792.63" y="698.42" width="4.0" height="172.08" fill="#a2cee9"/><rect x="796.63" y="698.42" width="1.745" height="172.08" fill="#d6f8ff"/><rect x="792.63" y="595.18" width="4.0" height="103.24" fill="#43a5d6"/><rect x="796.63" y="595.18" width="1.745" height="103.24" fill="#a2f0ff"/><rect x="792.63" y="547.00" width="4.0" height="48.18" fill="#2181c1"/><rect x="796.63" y="547.00" width="1.745" height="48.18" fill="#90ecfc"/><rect x="792.63" y="505.70" width="4.0" height="41.30" fill="#ebc766"/><rect x="796.63" y="505.70" width="1.745" height="41.30" fill="#fdeea0"/><rect x="798.38" y="705.31" width="4.0" height="165.19" fill="#a2cee9"/><rect x="802.38" y="705.31" width="1.745" height="165.19" fill="#d6f8ff"/><rect x="798.38" y="608.95" width="4.0" height="96.36" fill="#43a5d6"/><rect x="802.38" y="608.95" width="1.745" height="96.36" fill="#a2f0ff"/><rect x="798.38" y="547.00" width="4.0" height="61.95" fill="#2181c1"/><rect x="802.38" y="547.00" width="1.745" height="61.95" fill="#90ecfc"/><rect x="798.38" y="505.70" width="4.0" height="41.30" fill="#ebc766"/><rect x="802.38" y="505.70" width="1.745" height="41.30" fill="#fdeea0"/><rect x="804.12" y="719.07" width="4.0" height="151.43" fill="#a2cee9"/><rect x="808.12" y="719.07" width="1.745" height="151.43" fill="#d6f8ff"/><rect x="804.12" y="629.60" width="4.0" height="89.48" fill="#43a5d6"/><rect x="808.12" y="629.60" width="1.745" height="89.48" fill="#a2f0ff"/><rect x="804.12" y="567.65" width="4.0" height="61.95" fill="#2181c1"/><rect x="808.12" y="567.65" width="1.745" height="61.95" fill="#90ecfc"/><rect x="804.12" y="533.23" width="4.0" height="34.42" fill="#ebc766"/><rect x="808.12" y="533.23" width="1.745" height="34.42" fill="#fdeea0"/><rect x="809.87" y="712.19" width="4.0" height="158.31" fill="#a2cee9"/><rect x="813.87" y="712.19" width="1.745" height="158.31" fill="#d6f8ff"/><rect x="809.87" y="636.48" width="4.0" height="75.71" fill="#43a5d6"/><rect x="813.87" y="636.48" width="1.745" height="75.71" fill="#a2f0ff"/><rect x="809.87" y="553.88" width="4.0" height="82.60" fill="#2181c1"/><rect x="813.87" y="553.88" width="1.745" height="82.60" fill="#90ecfc"/><rect x="809.87" y="512.58" width="4.0" height="41.30" fill="#ebc766"/><rect x="813.87" y="512.58" width="1.745" height="41.30" fill="#fdeea0"/><rect x="815.62" y="732.84" width="4.0" height="137.66" fill="#a2cee9"/><rect x="819.62" y="732.84" width="1.745" height="137.66" fill="#d6f8ff"/><rect x="815.62" y="664.01" width="4.0" height="68.83" fill="#43a5d6"/><rect x="819.62" y="664.01" width="1.745" height="68.83" fill="#a2f0ff"/><rect x="815.62" y="560.76" width="4.0" height="103.25" fill="#2181c1"/><rect x="819.62" y="560.76" width="1.745" height="103.25" fill="#90ecfc"/><rect x="815.62" y="512.58" width="4.0" height="48.18" fill="#ebc766"/><rect x="819.62" y="512.58" width="1.745" height="48.18" fill="#fdeea0"/><rect x="821.36" y="787.90" width="4.0" height="82.60" fill="#a2cee9"/><rect x="825.36" y="787.90" width="1.745" height="82.60" fill="#d6f8ff"/><rect x="821.36" y="719.07" width="4.0" height="68.83" fill="#43a5d6"/><rect x="825.36" y="719.07" width="1.745" height="68.83" fill="#a2f0ff"/><rect x="821.36" y="567.65" width="4.0" height="151.43" fill="#2181c1"/><rect x="825.36" y="567.65" width="1.745" height="151.43" fill="#90ecfc"/><rect x="821.36" y="505.70" width="4.0" height="61.95" fill="#ebc766"/><rect x="825.36" y="505.70" width="1.745" height="61.95" fill="#fdeea0"/><rect x="827.11" y="787.90" width="4.0" height="82.60" fill="#a2cee9"/><rect x="831.11" y="787.90" width="1.745" height="82.60" fill="#d6f8ff"/><rect x="827.11" y="725.96" width="4.0" height="61.95" fill="#43a5d6"/><rect x="831.11" y="725.96" width="1.745" height="61.95" fill="#a2f0ff"/><rect x="827.11" y="574.53" width="4.0" height="151.43" fill="#2181c1"/><rect x="831.11" y="574.53" width="1.745" height="151.43" fill="#90ecfc"/><rect x="827.11" y="505.70" width="4.0" height="68.83" fill="#ebc766"/><rect x="831.11" y="505.70" width="1.745" height="68.83" fill="#fdeea0"/><rect x="832.85" y="808.55" width="4.0" height="61.95" fill="#a2cee9"/><rect x="836.85" y="808.55" width="1.745" height="61.95" fill="#d6f8ff"/><rect x="832.85" y="746.61" width="4.0" height="61.95" fill="#43a5d6"/><rect x="836.85" y="746.61" width="1.745" height="61.95" fill="#a2f0ff"/><rect x="832.85" y="588.30" width="4.0" height="158.31" fill="#2181c1"/><rect x="836.85" y="588.30" width="1.745" height="158.31" fill="#90ecfc"/><rect x="832.85" y="512.58" width="4.0" height="75.71" fill="#ebc766"/><rect x="836.85" y="512.58" width="1.745" height="75.71" fill="#fdeea0"/><rect x="838.60" y="794.79" width="4.0" height="75.71" fill="#a2cee9"/><rect x="842.60" y="794.79" width="1.745" height="75.71" fill="#d6f8ff"/><rect x="838.60" y="753.49" width="4.0" height="41.30" fill="#43a5d6"/><rect x="842.60" y="753.49" width="1.745" height="41.30" fill="#a2f0ff"/><rect x="838.60" y="615.83" width="4.0" height="137.66" fill="#2181c1"/><rect x="842.60" y="615.83" width="1.745" height="137.66" fill="#90ecfc"/><rect x="838.60" y="505.70" width="4.0" height="110.13" fill="#ebc766"/><rect x="842.60" y="505.70" width="1.745" height="110.13" fill="#fdeea0"/><rect x="844.34" y="794.79" width="4.0" height="75.71" fill="#a2cee9"/><rect x="848.34" y="794.79" width="1.745" height="75.71" fill="#d6f8ff"/><rect x="844.34" y="753.49" width="4.0" height="41.30" fill="#43a5d6"/><rect x="848.34" y="753.49" width="1.745" height="41.30" fill="#a2f0ff"/><rect x="844.34" y="622.71" width="4.0" height="130.78" fill="#2181c1"/><rect x="848.34" y="622.71" width="1.745" height="130.78" fill="#90ecfc"/><rect x="844.34" y="505.70" width="4.0" height="117.01" fill="#ebc766"/><rect x="848.34" y="505.70" width="1.745" height="117.01" fill="#fdeea0"/><rect x="850.09" y="794.79" width="4.0" height="75.71" fill="#a2cee9"/><rect x="854.09" y="794.79" width="1.745" height="75.71" fill="#d6f8ff"/><rect x="850.09" y="739.72" width="4.0" height="55.06" fill="#43a5d6"/><rect x="854.09" y="739.72" width="1.745" height="55.06" fill="#a2f0ff"/><rect x="850.09" y="608.95" width="4.0" height="130.78" fill="#2181c1"/><rect x="854.09" y="608.95" width="1.745" height="130.78" fill="#90ecfc"/><rect x="850.09" y="498.82" width="4.0" height="110.13" fill="#ebc766"/><rect x="854.09" y="498.82" width="1.745" height="110.13" fill="#fdeea0"/><rect x="855.83" y="801.67" width="4.0" height="68.83" fill="#a2cee9"/><rect x="859.83" y="801.67" width="1.745" height="68.83" fill="#d6f8ff"/><rect x="855.83" y="753.49" width="4.0" height="48.18" fill="#43a5d6"/><rect x="859.83" y="753.49" width="1.745" height="48.18" fill="#a2f0ff"/><rect x="855.83" y="622.71" width="4.0" height="130.78" fill="#2181c1"/><rect x="859.83" y="622.71" width="1.745" height="130.78" fill="#90ecfc"/><rect x="855.83" y="512.58" width="4.0" height="110.13" fill="#ebc766"/><rect x="859.83" y="512.58" width="1.745" height="110.13" fill="#fdeea0"/><rect x="861.58" y="801.67" width="4.0" height="68.83" fill="#a2cee9"/><rect x="865.58" y="801.67" width="1.745" height="68.83" fill="#d6f8ff"/><rect x="861.58" y="746.61" width="4.0" height="55.06" fill="#43a5d6"/><rect x="865.58" y="746.61" width="1.745" height="55.06" fill="#a2f0ff"/><rect x="861.58" y="608.95" width="4.0" height="137.66" fill="#2181c1"/><rect x="865.58" y="608.95" width="1.745" height="137.66" fill="#90ecfc"/><rect x="861.58" y="512.58" width="4.0" height="96.36" fill="#ebc766"/><rect x="865.58" y="512.58" width="1.745" height="96.36" fill="#fdeea0"/><rect x="867.32" y="787.90" width="4.0" height="82.60" fill="#a2cee9"/><rect x="871.32" y="787.90" width="1.745" height="82.60" fill="#d6f8ff"/><rect x="867.32" y="725.96" width="4.0" height="61.95" fill="#43a5d6"/><rect x="871.32" y="725.96" width="1.745" height="61.95" fill="#a2f0ff"/><rect x="867.32" y="588.30" width="4.0" height="137.66" fill="#2181c1"/><rect x="871.32" y="588.30" width="1.745" height="137.66" fill="#90ecfc"/><rect x="867.32" y="498.82" width="4.0" height="89.48" fill="#ebc766"/><rect x="871.32" y="498.82" width="1.745" height="89.48" fill="#fdeea0"/><rect x="873.07" y="815.44" width="4.0" height="55.06" fill="#a2cee9"/><rect x="877.07" y="815.44" width="1.745" height="55.06" fill="#d6f8ff"/><rect x="873.07" y="739.72" width="4.0" height="75.71" fill="#43a5d6"/><rect x="877.07" y="739.72" width="1.745" height="75.71" fill="#a2f0ff"/><rect x="873.07" y="602.06" width="4.0" height="137.66" fill="#2181c1"/><rect x="877.07" y="602.06" width="1.745" height="137.66" fill="#90ecfc"/><rect x="873.07" y="512.58" width="4.0" height="89.48" fill="#ebc766"/><rect x="877.07" y="512.58" width="1.745" height="89.48" fill="#fdeea0"/><rect x="878.81" y="815.44" width="4.0" height="55.06" fill="#a2cee9"/><rect x="882.81" y="815.44" width="1.745" height="55.06" fill="#d6f8ff"/><rect x="878.81" y="732.84" width="4.0" height="82.60" fill="#43a5d6"/><rect x="882.81" y="732.84" width="1.745" height="82.60" fill="#a2f0ff"/><rect x="878.81" y="622.71" width="4.0" height="110.13" fill="#2181c1"/><rect x="882.81" y="622.71" width="1.745" height="110.13" fill="#90ecfc"/><rect x="878.81" y="512.58" width="4.0" height="110.13" fill="#ebc766"/><rect x="882.81" y="512.58" width="1.745" height="110.13" fill="#fdeea0"/><rect x="884.56" y="808.55" width="4.0" height="61.95" fill="#a2cee9"/><rect x="888.56" y="808.55" width="1.745" height="61.95" fill="#d6f8ff"/><rect x="884.56" y="739.72" width="4.0" height="68.83" fill="#43a5d6"/><rect x="888.56" y="739.72" width="1.745" height="68.83" fill="#a2f0ff"/><rect x="884.56" y="629.60" width="4.0" height="110.13" fill="#2181c1"/><rect x="888.56" y="629.60" width="1.745" height="110.13" fill="#90ecfc"/><rect x="884.56" y="505.70" width="4.0" height="123.89" fill="#ebc766"/><rect x="888.56" y="505.70" width="1.745" height="123.89" fill="#fdeea0"/><rect x="890.30" y="815.44" width="4.0" height="55.06" fill="#a2cee9"/><rect x="894.30" y="815.44" width="1.745" height="55.06" fill="#d6f8ff"/><rect x="890.30" y="739.72" width="4.0" height="75.71" fill="#43a5d6"/><rect x="894.30" y="739.72" width="1.745" height="75.71" fill="#a2f0ff"/><rect x="890.30" y="643.36" width="4.0" height="96.36" fill="#2181c1"/><rect x="894.30" y="643.36" width="1.745" height="96.36" fill="#90ecfc"/><rect x="890.30" y="512.58" width="4.0" height="130.78" fill="#ebc766"/><rect x="894.30" y="512.58" width="1.745" height="130.78" fill="#fdeea0"/><rect x="896.05" y="808.55" width="4.0" height="61.95" fill="#a2cee9"/><rect x="900.05" y="808.55" width="1.745" height="61.95" fill="#d6f8ff"/><rect x="896.05" y="739.72" width="4.0" height="68.83" fill="#43a5d6"/><rect x="900.05" y="739.72" width="1.745" height="68.83" fill="#a2f0ff"/><rect x="896.05" y="643.36" width="4.0" height="96.36" fill="#2181c1"/><rect x="900.05" y="643.36" width="1.745" height="96.36" fill="#90ecfc"/><rect x="896.05" y="512.58" width="4.0" height="130.78" fill="#ebc766"/><rect x="900.05" y="512.58" width="1.745" height="130.78" fill="#fdeea0"/><rect x="901.79" y="815.44" width="4.0" height="55.06" fill="#a2cee9"/><rect x="905.79" y="815.44" width="1.745" height="55.06" fill="#d6f8ff"/><rect x="901.79" y="753.49" width="4.0" height="61.95" fill="#43a5d6"/><rect x="905.79" y="753.49" width="1.745" height="61.95" fill="#a2f0ff"/><rect x="901.79" y="636.48" width="4.0" height="117.01" fill="#2181c1"/><rect x="905.79" y="636.48" width="1.745" height="117.01" fill="#90ecfc"/><rect x="901.79" y="512.58" width="4.0" height="123.89" fill="#ebc766"/><rect x="905.79" y="512.58" width="1.745" height="123.89" fill="#fdeea0"/><rect x="907.53" y="801.67" width="4.0" height="68.83" fill="#a2cee9"/><rect x="911.53" y="801.67" width="1.745" height="68.83" fill="#d6f8ff"/><rect x="907.53" y="739.72" width="4.0" height="61.95" fill="#43a5d6"/><rect x="911.53" y="739.72" width="1.745" height="61.95" fill="#a2f0ff"/><rect x="907.53" y="629.60" width="4.0" height="110.13" fill="#2181c1"/><rect x="911.53" y="629.60" width="1.745" height="110.13" fill="#90ecfc"/><rect x="907.53" y="505.70" width="4.0" height="123.89" fill="#ebc766"/><rect x="911.53" y="505.70" width="1.745" height="123.89" fill="#fdeea0"/><rect x="913.28" y="822.32" width="4.0" height="48.18" fill="#a2cee9"/><rect x="917.28" y="822.32" width="1.745" height="48.18" fill="#d6f8ff"/><rect x="913.28" y="781.02" width="4.0" height="41.30" fill="#43a5d6"/><rect x="917.28" y="781.02" width="1.745" height="41.30" fill="#a2f0ff"/><rect x="913.28" y="657.13" width="4.0" height="123.89" fill="#2181c1"/><rect x="917.28" y="657.13" width="1.745" height="123.89" fill="#90ecfc"/><rect x="913.28" y="533.23" width="4.0" height="123.89" fill="#ebc766"/><rect x="917.28" y="533.23" width="1.745" height="123.89" fill="#fdeea0"/><rect x="919.02" y="801.67" width="4.0" height="68.83" fill="#a2cee9"/><rect x="923.02" y="801.67" width="1.745" height="68.83" fill="#d6f8ff"/><rect x="919.02" y="760.37" width="4.0" height="41.30" fill="#43a5d6"/><rect x="923.02" y="760.37" width="1.745" height="41.30" fill="#a2f0ff"/><rect x="919.02" y="629.60" width="4.0" height="130.78" fill="#2181c1"/><rect x="923.02" y="629.60" width="1.745" height="130.78" fill="#90ecfc"/><rect x="919.02" y="512.58" width="4.0" height="117.01" fill="#ebc766"/><rect x="923.02" y="512.58" width="1.745" height="117.01" fill="#fdeea0"/><rect x="924.77" y="815.44" width="4.0" height="55.06" fill="#a2cee9"/><rect x="928.77" y="815.44" width="1.745" height="55.06" fill="#d6f8ff"/><rect x="924.77" y="774.14" width="4.0" height="41.30" fill="#43a5d6"/><rect x="928.77" y="774.14" width="1.745" height="41.30" fill="#a2f0ff"/><rect x="924.77" y="650.24" width="4.0" height="123.89" fill="#2181c1"/><rect x="928.77" y="650.24" width="1.745" height="123.89" fill="#90ecfc"/><rect x="924.77" y="526.35" width="4.0" height="123.89" fill="#ebc766"/><rect x="928.77" y="526.35" width="1.745" height="123.89" fill="#fdeea0"/><rect x="930.51" y="808.55" width="4.0" height="61.95" fill="#a2cee9"/><rect x="934.51" y="808.55" width="1.745" height="61.95" fill="#d6f8ff"/><rect x="930.51" y="774.14" width="4.0" height="34.41" fill="#43a5d6"/><rect x="934.51" y="774.14" width="1.745" height="34.41" fill="#a2f0ff"/><rect x="930.51" y="629.60" width="4.0" height="144.54" fill="#2181c1"/><rect x="934.51" y="629.60" width="1.745" height="144.54" fill="#90ecfc"/><rect x="930.51" y="519.47" width="4.0" height="110.13" fill="#ebc766"/><rect x="934.51" y="519.47" width="1.745" height="110.13" fill="#fdeea0"/><rect x="936.26" y="794.79" width="4.0" height="75.71" fill="#a2cee9"/><rect x="940.26" y="794.79" width="1.745" height="75.71" fill="#d6f8ff"/><rect x="936.26" y="746.61" width="4.0" height="48.18" fill="#43a5d6"/><rect x="940.26" y="746.61" width="1.745" height="48.18" fill="#a2f0ff"/><rect x="936.26" y="629.60" width="4.0" height="117.01" fill="#2181c1"/><rect x="940.26" y="629.60" width="1.745" height="117.01" fill="#90ecfc"/><rect x="936.26" y="512.58" width="4.0" height="117.01" fill="#ebc766"/><rect x="940.26" y="512.58" width="1.745" height="117.01" fill="#fdeea0"/><rect x="942.00" y="815.44" width="4.0" height="55.06" fill="#a2cee9"/><rect x="946.00" y="815.44" width="1.745" height="55.06" fill="#d6f8ff"/><rect x="942.00" y="753.49" width="4.0" height="61.95" fill="#43a5d6"/><rect x="946.00" y="753.49" width="1.745" height="61.95" fill="#a2f0ff"/><rect x="942.00" y="650.24" width="4.0" height="103.25" fill="#2181c1"/><rect x="946.00" y="650.24" width="1.745" height="103.25" fill="#90ecfc"/><rect x="942.00" y="505.70" width="4.0" height="144.54" fill="#ebc766"/><rect x="946.00" y="505.70" width="1.745" height="144.54" fill="#fdeea0"/><rect x="947.75" y="808.55" width="4.0" height="61.95" fill="#a2cee9"/><rect x="951.75" y="808.55" width="1.745" height="61.95" fill="#d6f8ff"/><rect x="947.75" y="712.19" width="4.0" height="96.36" fill="#43a5d6"/><rect x="951.75" y="712.19" width="1.745" height="96.36" fill="#a2f0ff"/><rect x="947.75" y="629.60" width="4.0" height="82.60" fill="#2181c1"/><rect x="951.75" y="629.60" width="1.745" height="82.60" fill="#90ecfc"/><rect x="947.75" y="512.58" width="4.0" height="117.01" fill="#ebc766"/><rect x="951.75" y="512.58" width="1.745" height="117.01" fill="#fdeea0"/><rect x="953.50" y="815.44" width="4.0" height="55.06" fill="#a2cee9"/><rect x="957.50" y="815.44" width="1.745" height="55.06" fill="#d6f8ff"/><rect x="953.50" y="732.84" width="4.0" height="82.60" fill="#43a5d6"/><rect x="957.50" y="732.84" width="1.745" height="82.60" fill="#a2f0ff"/><rect x="953.50" y="629.60" width="4.0" height="103.25" fill="#2181c1"/><rect x="957.50" y="629.60" width="1.745" height="103.25" fill="#90ecfc"/><rect x="953.50" y="512.58" width="4.0" height="117.01" fill="#ebc766"/><rect x="957.50" y="512.58" width="1.745" height="117.01" fill="#fdeea0"/><rect x="959.24" y="842.97" width="4.0" height="27.53" fill="#a2cee9"/><rect x="963.24" y="842.97" width="1.745" height="27.53" fill="#d6f8ff"/><rect x="959.24" y="774.14" width="4.0" height="68.83" fill="#43a5d6"/><rect x="963.24" y="774.14" width="1.745" height="68.83" fill="#a2f0ff"/><rect x="959.24" y="664.01" width="4.0" height="110.13" fill="#2181c1"/><rect x="963.24" y="664.01" width="1.745" height="110.13" fill="#90ecfc"/><rect x="959.24" y="512.58" width="4.0" height="151.43" fill="#ebc766"/><rect x="963.24" y="512.58" width="1.745" height="151.43" fill="#fdeea0"/><rect x="964.99" y="836.09" width="4.0" height="34.41" fill="#a2cee9"/><rect x="968.99" y="836.09" width="1.745" height="34.41" fill="#d6f8ff"/><rect x="964.99" y="767.25" width="4.0" height="68.83" fill="#43a5d6"/><rect x="968.99" y="767.25" width="1.745" height="68.83" fill="#a2f0ff"/><rect x="964.99" y="657.13" width="4.0" height="110.13" fill="#2181c1"/><rect x="968.99" y="657.13" width="1.745" height="110.13" fill="#90ecfc"/><rect x="964.99" y="505.70" width="4.0" height="151.43" fill="#ebc766"/><rect x="968.99" y="505.70" width="1.745" height="151.43" fill="#fdeea0"/><rect x="970.73" y="815.44" width="4.0" height="55.06" fill="#a2cee9"/><rect x="974.73" y="815.44" width="1.745" height="55.06" fill="#d6f8ff"/><rect x="970.73" y="739.72" width="4.0" height="75.71" fill="#43a5d6"/><rect x="974.73" y="739.72" width="1.745" height="75.71" fill="#a2f0ff"/><rect x="970.73" y="636.48" width="4.0" height="103.24" fill="#2181c1"/><rect x="974.73" y="636.48" width="1.745" height="103.24" fill="#90ecfc"/><rect x="970.73" y="512.58" width="4.0" height="123.89" fill="#ebc766"/><rect x="974.73" y="512.58" width="1.745" height="123.89" fill="#fdeea0"/><rect x="976.48" y="801.67" width="4.0" height="68.83" fill="#a2cee9"/><rect x="980.48" y="801.67" width="1.745" height="68.83" fill="#d6f8ff"/><rect x="976.48" y="746.61" width="4.0" height="55.06" fill="#43a5d6"/><rect x="980.48" y="746.61" width="1.745" height="55.06" fill="#a2f0ff"/><rect x="976.48" y="636.48" width="4.0" height="110.13" fill="#2181c1"/><rect x="980.48" y="636.48" width="1.745" height="110.13" fill="#90ecfc"/><rect x="976.48" y="512.58" width="4.0" height="123.89" fill="#ebc766"/><rect x="980.48" y="512.58" width="1.745" height="123.89" fill="#fdeea0"/><rect x="982.22" y="815.44" width="4.0" height="55.06" fill="#a2cee9"/><rect x="986.22" y="815.44" width="1.745" height="55.06" fill="#d6f8ff"/><rect x="982.22" y="719.07" width="4.0" height="96.36" fill="#43a5d6"/><rect x="986.22" y="719.07" width="1.745" height="96.36" fill="#a2f0ff"/><rect x="982.22" y="629.60" width="4.0" height="89.48" fill="#2181c1"/><rect x="986.22" y="629.60" width="1.745" height="89.48" fill="#90ecfc"/><rect x="982.22" y="512.58" width="4.0" height="117.01" fill="#ebc766"/><rect x="986.22" y="512.58" width="1.745" height="117.01" fill="#fdeea0"/><rect x="987.97" y="808.55" width="4.0" height="61.95" fill="#a2cee9"/><rect x="991.97" y="808.55" width="1.745" height="61.95" fill="#d6f8ff"/><rect x="987.97" y="719.07" width="4.0" height="89.48" fill="#43a5d6"/><rect x="991.97" y="719.07" width="1.745" height="89.48" fill="#a2f0ff"/><rect x="987.97" y="615.83" width="4.0" height="103.25" fill="#2181c1"/><rect x="991.97" y="615.83" width="1.745" height="103.25" fill="#90ecfc"/><rect x="987.97" y="505.70" width="4.0" height="110.13" fill="#ebc766"/><rect x="991.97" y="505.70" width="1.745" height="110.13" fill="#fdeea0"/><rect x="993.71" y="815.44" width="4.0" height="55.06" fill="#a2cee9"/><rect x="997.71" y="815.44" width="1.745" height="55.06" fill="#d6f8ff"/><rect x="993.71" y="739.72" width="4.0" height="75.71" fill="#43a5d6"/><rect x="997.71" y="739.72" width="1.745" height="75.71" fill="#a2f0ff"/><rect x="993.71" y="629.60" width="4.0" height="110.13" fill="#2181c1"/><rect x="997.71" y="629.60" width="1.745" height="110.13" fill="#90ecfc"/><rect x="993.71" y="505.70" width="4.0" height="123.89" fill="#ebc766"/><rect x="997.71" y="505.70" width="1.745" height="123.89" fill="#fdeea0"/><rect x="999.45" y="808.55" width="4.0" height="61.95" fill="#a2cee9"/><rect x="1003.45" y="808.55" width="1.745" height="61.95" fill="#d6f8ff"/><rect x="999.45" y="739.72" width="4.0" height="68.83" fill="#43a5d6"/><rect x="1003.45" y="739.72" width="1.745" height="68.83" fill="#a2f0ff"/><rect x="999.45" y="664.01" width="4.0" height="75.71" fill="#2181c1"/><rect x="1003.45" y="664.01" width="1.745" height="75.71" fill="#90ecfc"/><rect x="999.45" y="519.47" width="4.0" height="144.54" fill="#ebc766"/><rect x="1003.45" y="519.47" width="1.745" height="144.54" fill="#fdeea0"/><rect x="1005.20" y="815.44" width="4.0" height="55.06" fill="#a2cee9"/><rect x="1009.20" y="815.44" width="1.745" height="55.06" fill="#d6f8ff"/><rect x="1005.20" y="746.61" width="4.0" height="68.83" fill="#43a5d6"/><rect x="1009.20" y="746.61" width="1.745" height="68.83" fill="#a2f0ff"/><rect x="1005.20" y="643.36" width="4.0" height="103.25" fill="#2181c1"/><rect x="1009.20" y="643.36" width="1.745" height="103.25" fill="#90ecfc"/><rect x="1005.20" y="512.58" width="4.0" height="130.78" fill="#ebc766"/><rect x="1009.20" y="512.58" width="1.745" height="130.78" fill="#fdeea0"/><rect x="1010.94" y="822.32" width="4.0" height="48.18" fill="#a2cee9"/><rect x="1014.94" y="822.32" width="1.745" height="48.18" fill="#d6f8ff"/><rect x="1010.94" y="746.61" width="4.0" height="75.71" fill="#43a5d6"/><rect x="1014.94" y="746.61" width="1.745" height="75.71" fill="#a2f0ff"/><rect x="1010.94" y="643.36" width="4.0" height="103.25" fill="#2181c1"/><rect x="1014.94" y="643.36" width="1.745" height="103.25" fill="#90ecfc"/><rect x="1010.94" y="512.58" width="4.0" height="130.78" fill="#ebc766"/><rect x="1014.94" y="512.58" width="1.745" height="130.78" fill="#fdeea0"/><rect x="1016.69" y="822.32" width="4.0" height="48.18" fill="#a2cee9"/><rect x="1020.69" y="822.32" width="1.745" height="48.18" fill="#d6f8ff"/><rect x="1016.69" y="739.72" width="4.0" height="82.60" fill="#43a5d6"/><rect x="1020.69" y="739.72" width="1.745" height="82.60" fill="#a2f0ff"/><rect x="1016.69" y="664.01" width="4.0" height="75.71" fill="#2181c1"/><rect x="1020.69" y="664.01" width="1.745" height="75.71" fill="#90ecfc"/><rect x="1016.69" y="512.58" width="4.0" height="151.43" fill="#ebc766"/><rect x="1020.69" y="512.58" width="1.745" height="151.43" fill="#fdeea0"/><rect x="1022.43" y="822.32" width="4.0" height="48.18" fill="#a2cee9"/><rect x="1026.43" y="822.32" width="1.745" height="48.18" fill="#d6f8ff"/><rect x="1022.43" y="746.61" width="4.0" height="75.71" fill="#43a5d6"/><rect x="1026.43" y="746.61" width="1.745" height="75.71" fill="#a2f0ff"/><rect x="1022.43" y="650.24" width="4.0" height="96.36" fill="#2181c1"/><rect x="1026.43" y="650.24" width="1.745" height="96.36" fill="#90ecfc"/><rect x="1022.43" y="505.70" width="4.0" height="144.54" fill="#ebc766"/><rect x="1026.43" y="505.70" width="1.745" height="144.54" fill="#fdeea0"/><rect x="1028.18" y="801.67" width="4.0" height="68.83" fill="#a2cee9"/><rect x="1032.18" y="801.67" width="1.745" height="68.83" fill="#d6f8ff"/><rect x="1028.18" y="746.61" width="4.0" height="55.06" fill="#43a5d6"/><rect x="1032.18" y="746.61" width="1.745" height="55.06" fill="#a2f0ff"/><rect x="1028.18" y="636.48" width="4.0" height="110.13" fill="#2181c1"/><rect x="1032.18" y="636.48" width="1.745" height="110.13" fill="#90ecfc"/><rect x="1028.18" y="498.82" width="4.0" height="137.66" fill="#ebc766"/><rect x="1032.18" y="498.82" width="1.745" height="137.66" fill="#fdeea0"/><rect x="1033.92" y="822.32" width="4.0" height="48.18" fill="#a2cee9"/><rect x="1037.92" y="822.32" width="1.745" height="48.18" fill="#d6f8ff"/><rect x="1033.92" y="767.25" width="4.0" height="55.06" fill="#43a5d6"/><rect x="1037.92" y="767.25" width="1.745" height="55.06" fill="#a2f0ff"/><rect x="1033.92" y="643.36" width="4.0" height="123.89" fill="#2181c1"/><rect x="1037.92" y="643.36" width="1.745" height="123.89" fill="#90ecfc"/><rect x="1033.92" y="512.58" width="4.0" height="130.78" fill="#ebc766"/><rect x="1037.92" y="512.58" width="1.745" height="130.78" fill="#fdeea0"/><rect x="1039.67" y="822.32" width="4.0" height="48.18" fill="#a2cee9"/><rect x="1043.67" y="822.32" width="1.745" height="48.18" fill="#d6f8ff"/><rect x="1039.67" y="760.37" width="4.0" height="61.95" fill="#43a5d6"/><rect x="1043.67" y="760.37" width="1.745" height="61.95" fill="#a2f0ff"/><rect x="1039.67" y="657.13" width="4.0" height="103.25" fill="#2181c1"/><rect x="1043.67" y="657.13" width="1.745" height="103.25" fill="#90ecfc"/><rect x="1039.67" y="512.58" width="4.0" height="144.54" fill="#ebc766"/><rect x="1043.67" y="512.58" width="1.745" height="144.54" fill="#fdeea0"/><rect x="1045.41" y="822.32" width="4.0" height="48.18" fill="#a2cee9"/><rect x="1049.41" y="822.32" width="1.745" height="48.18" fill="#d6f8ff"/><rect x="1045.41" y="760.37" width="4.0" height="61.95" fill="#43a5d6"/><rect x="1049.41" y="760.37" width="1.745" height="61.95" fill="#a2f0ff"/><rect x="1045.41" y="650.24" width="4.0" height="110.13" fill="#2181c1"/><rect x="1049.41" y="650.24" width="1.745" height="110.13" fill="#90ecfc"/><rect x="1045.41" y="505.70" width="4.0" height="144.54" fill="#ebc766"/><rect x="1049.41" y="505.70" width="1.745" height="144.54" fill="#fdeea0"/><rect x="1051.16" y="822.32" width="4.0" height="48.18" fill="#a2cee9"/><rect x="1055.16" y="822.32" width="1.745" height="48.18" fill="#d6f8ff"/><rect x="1051.16" y="767.25" width="4.0" height="55.06" fill="#43a5d6"/><rect x="1055.16" y="767.25" width="1.745" height="55.06" fill="#a2f0ff"/><rect x="1051.16" y="657.13" width="4.0" height="110.13" fill="#2181c1"/><rect x="1055.16" y="657.13" width="1.745" height="110.13" fill="#90ecfc"/><rect x="1051.16" y="505.70" width="4.0" height="151.43" fill="#ebc766"/><rect x="1055.16" y="505.70" width="1.745" height="151.43" fill="#fdeea0"/><rect x="1056.90" y="822.32" width="4.0" height="48.18" fill="#a2cee9"/><rect x="1060.90" y="822.32" width="1.745" height="48.18" fill="#d6f8ff"/><rect x="1056.90" y="753.49" width="4.0" height="68.83" fill="#43a5d6"/><rect x="1060.90" y="753.49" width="1.745" height="68.83" fill="#a2f0ff"/><rect x="1056.90" y="636.48" width="4.0" height="117.01" fill="#2181c1"/><rect x="1060.90" y="636.48" width="1.745" height="117.01" fill="#90ecfc"/><rect x="1056.90" y="498.82" width="4.0" height="137.66" fill="#ebc766"/><rect x="1060.90" y="498.82" width="1.745" height="137.66" fill="#fdeea0"/><rect x="1062.65" y="829.20" width="4.0" height="41.30" fill="#a2cee9"/><rect x="1066.65" y="829.20" width="1.745" height="41.30" fill="#d6f8ff"/><rect x="1062.65" y="774.14" width="4.0" height="55.06" fill="#43a5d6"/><rect x="1066.65" y="774.14" width="1.745" height="55.06" fill="#a2f0ff"/><rect x="1062.65" y="650.24" width="4.0" height="123.89" fill="#2181c1"/><rect x="1066.65" y="650.24" width="1.745" height="123.89" fill="#90ecfc"/><rect x="1062.65" y="505.70" width="4.0" height="144.54" fill="#ebc766"/><rect x="1066.65" y="505.70" width="1.745" height="144.54" fill="#fdeea0"/><rect x="1068.39" y="829.20" width="4.0" height="41.30" fill="#a2cee9"/><rect x="1072.39" y="829.20" width="1.745" height="41.30" fill="#d6f8ff"/><rect x="1068.39" y="781.02" width="4.0" height="48.18" fill="#43a5d6"/><rect x="1072.39" y="781.02" width="1.745" height="48.18" fill="#a2f0ff"/><rect x="1068.39" y="643.36" width="4.0" height="137.66" fill="#2181c1"/><rect x="1072.39" y="643.36" width="1.745" height="137.66" fill="#90ecfc"/><rect x="1068.39" y="505.70" width="4.0" height="137.66" fill="#ebc766"/><rect x="1072.39" y="505.70" width="1.745" height="137.66" fill="#fdeea0"/><rect x="1074.14" y="822.32" width="4.0" height="48.18" fill="#a2cee9"/><rect x="1078.14" y="822.32" width="1.745" height="48.18" fill="#d6f8ff"/><rect x="1074.14" y="774.14" width="4.0" height="48.18" fill="#43a5d6"/><rect x="1078.14" y="774.14" width="1.745" height="48.18" fill="#a2f0ff"/><rect x="1074.14" y="657.13" width="4.0" height="117.01" fill="#2181c1"/><rect x="1078.14" y="657.13" width="1.745" height="117.01" fill="#90ecfc"/><rect x="1074.14" y="505.70" width="4.0" height="151.43" fill="#ebc766"/><rect x="1078.14" y="505.70" width="1.745" height="151.43" fill="#fdeea0"/><rect x="1079.88" y="815.44" width="4.0" height="55.06" fill="#a2cee9"/><rect x="1083.88" y="815.44" width="1.745" height="55.06" fill="#d6f8ff"/><rect x="1079.88" y="774.14" width="4.0" height="41.30" fill="#43a5d6"/><rect x="1083.88" y="774.14" width="1.745" height="41.30" fill="#a2f0ff"/><rect x="1079.88" y="657.13" width="4.0" height="117.01" fill="#2181c1"/><rect x="1083.88" y="657.13" width="1.745" height="117.01" fill="#90ecfc"/><rect x="1079.88" y="505.70" width="4.0" height="151.43" fill="#ebc766"/><rect x="1083.88" y="505.70" width="1.745" height="151.43" fill="#fdeea0"/><rect x="1085.63" y="815.44" width="4.0" height="55.06" fill="#a2cee9"/><rect x="1089.63" y="815.44" width="1.745" height="55.06" fill="#d6f8ff"/><rect x="1085.63" y="774.14" width="4.0" height="41.30" fill="#43a5d6"/><rect x="1089.63" y="774.14" width="1.745" height="41.30" fill="#a2f0ff"/><rect x="1085.63" y="643.36" width="4.0" height="130.78" fill="#2181c1"/><rect x="1089.63" y="643.36" width="1.745" height="130.78" fill="#90ecfc"/><rect x="1085.63" y="505.70" width="4.0" height="137.66" fill="#ebc766"/><rect x="1089.63" y="505.70" width="1.745" height="137.66" fill="#fdeea0"/><rect x="1091.38" y="822.32" width="4.0" height="48.18" fill="#a2cee9"/><rect x="1095.38" y="822.32" width="1.745" height="48.18" fill="#d6f8ff"/><rect x="1091.38" y="767.25" width="4.0" height="55.06" fill="#43a5d6"/><rect x="1095.38" y="767.25" width="1.745" height="55.06" fill="#a2f0ff"/><rect x="1091.38" y="643.36" width="4.0" height="123.89" fill="#2181c1"/><rect x="1095.38" y="643.36" width="1.745" height="123.89" fill="#90ecfc"/><rect x="1091.38" y="505.70" width="4.0" height="137.66" fill="#ebc766"/><rect x="1095.38" y="505.70" width="1.745" height="137.66" fill="#fdeea0"/><rect x="1097.12" y="815.44" width="4.0" height="55.06" fill="#a2cee9"/><rect x="1101.12" y="815.44" width="1.745" height="55.06" fill="#d6f8ff"/><rect x="1097.12" y="781.02" width="4.0" height="34.42" fill="#43a5d6"/><rect x="1101.12" y="781.02" width="1.745" height="34.42" fill="#a2f0ff"/><rect x="1097.12" y="657.13" width="4.0" height="123.89" fill="#2181c1"/><rect x="1101.12" y="657.13" width="1.745" height="123.89" fill="#90ecfc"/><rect x="1097.12" y="505.70" width="4.0" height="151.43" fill="#ebc766"/><rect x="1101.12" y="505.70" width="1.745" height="151.43" fill="#fdeea0"/><rect x="1102.87" y="829.20" width="4.0" height="41.30" fill="#a2cee9"/><rect x="1106.87" y="829.20" width="1.745" height="41.30" fill="#d6f8ff"/><rect x="1102.87" y="781.02" width="4.0" height="48.18" fill="#43a5d6"/><rect x="1106.87" y="781.02" width="1.745" height="48.18" fill="#a2f0ff"/><rect x="1102.87" y="650.24" width="4.0" height="130.78" fill="#2181c1"/><rect x="1106.87" y="650.24" width="1.745" height="130.78" fill="#90ecfc"/><rect x="1102.87" y="505.70" width="4.0" height="144.54" fill="#ebc766"/><rect x="1106.87" y="505.70" width="1.745" height="144.54" fill="#fdeea0"/><rect x="1108.61" y="829.20" width="4.0" height="41.30" fill="#a2cee9"/><rect x="1112.61" y="829.20" width="1.745" height="41.30" fill="#d6f8ff"/><rect x="1108.61" y="808.55" width="4.0" height="20.65" fill="#43a5d6"/><rect x="1112.61" y="808.55" width="1.745" height="20.65" fill="#a2f0ff"/><rect x="1108.61" y="657.13" width="4.0" height="151.43" fill="#2181c1"/><rect x="1112.61" y="657.13" width="1.745" height="151.43" fill="#90ecfc"/><rect x="1108.61" y="512.58" width="4.0" height="144.54" fill="#ebc766"/><rect x="1112.61" y="512.58" width="1.745" height="144.54" fill="#fdeea0"/><rect x="1114.36" y="849.85" width="4.0" height="20.65" fill="#a2cee9"/><rect x="1118.36" y="849.85" width="1.745" height="20.65" fill="#d6f8ff"/><rect x="1114.36" y="801.67" width="4.0" height="48.18" fill="#43a5d6"/><rect x="1118.36" y="801.67" width="1.745" height="48.18" fill="#a2f0ff"/><rect x="1114.36" y="657.13" width="4.0" height="144.54" fill="#2181c1"/><rect x="1118.36" y="657.13" width="1.745" height="144.54" fill="#90ecfc"/><rect x="1114.36" y="505.70" width="4.0" height="151.43" fill="#ebc766"/><rect x="1118.36" y="505.70" width="1.745" height="151.43" fill="#fdeea0"/><rect x="1120.10" y="849.85" width="4.0" height="20.65" fill="#a2cee9"/><rect x="1124.10" y="849.85" width="1.745" height="20.65" fill="#d6f8ff"/><rect x="1120.10" y="808.55" width="4.0" height="41.30" fill="#43a5d6"/><rect x="1124.10" y="808.55" width="1.745" height="41.30" fill="#a2f0ff"/><rect x="1120.10" y="664.01" width="4.0" height="144.54" fill="#2181c1"/><rect x="1124.10" y="664.01" width="1.745" height="144.54" fill="#90ecfc"/><rect x="1120.10" y="512.58" width="4.0" height="151.43" fill="#ebc766"/><rect x="1124.10" y="512.58" width="1.745" height="151.43" fill="#fdeea0"/><rect x="1125.85" y="842.97" width="4.0" height="27.53" fill="#a2cee9"/><rect x="1129.85" y="842.97" width="1.745" height="27.53" fill="#d6f8ff"/><rect x="1125.85" y="808.55" width="4.0" height="34.41" fill="#43a5d6"/><rect x="1129.85" y="808.55" width="1.745" height="34.41" fill="#a2f0ff"/><rect x="1125.85" y="670.89" width="4.0" height="137.66" fill="#2181c1"/><rect x="1129.85" y="670.89" width="1.745" height="137.66" fill="#90ecfc"/><rect x="1125.85" y="505.70" width="4.0" height="165.19" fill="#ebc766"/><rect x="1129.85" y="505.70" width="1.745" height="165.19" fill="#fdeea0"/><rect x="1131.59" y="849.85" width="4.0" height="20.65" fill="#a2cee9"/><rect x="1135.59" y="849.85" width="1.745" height="20.65" fill="#d6f8ff"/><rect x="1131.59" y="815.44" width="4.0" height="34.41" fill="#43a5d6"/><rect x="1135.59" y="815.44" width="1.745" height="34.41" fill="#a2f0ff"/><rect x="1131.59" y="684.66" width="4.0" height="130.78" fill="#2181c1"/><rect x="1135.59" y="684.66" width="1.745" height="130.78" fill="#90ecfc"/><rect x="1131.59" y="512.58" width="4.0" height="172.07" fill="#ebc766"/><rect x="1135.59" y="512.58" width="1.745" height="172.07" fill="#fdeea0"/><rect x="1137.34" y="842.97" width="4.0" height="27.53" fill="#a2cee9"/><rect x="1141.34" y="842.97" width="1.745" height="27.53" fill="#d6f8ff"/><rect x="1137.34" y="822.32" width="4.0" height="20.65" fill="#43a5d6"/><rect x="1141.34" y="822.32" width="1.745" height="20.65" fill="#a2f0ff"/><rect x="1137.34" y="664.01" width="4.0" height="158.31" fill="#2181c1"/><rect x="1141.34" y="664.01" width="1.745" height="158.31" fill="#90ecfc"/><rect x="1137.34" y="505.70" width="4.0" height="158.31" fill="#ebc766"/><rect x="1141.34" y="505.70" width="1.745" height="158.31" fill="#fdeea0"/><rect x="1143.08" y="842.97" width="4.0" height="27.53" fill="#a2cee9"/><rect x="1147.08" y="842.97" width="1.745" height="27.53" fill="#d6f8ff"/><rect x="1143.08" y="822.32" width="4.0" height="20.65" fill="#43a5d6"/><rect x="1147.08" y="822.32" width="1.745" height="20.65" fill="#a2f0ff"/><rect x="1143.08" y="684.66" width="4.0" height="137.66" fill="#2181c1"/><rect x="1147.08" y="684.66" width="1.745" height="137.66" fill="#90ecfc"/><rect x="1143.08" y="512.58" width="4.0" height="172.07" fill="#ebc766"/><rect x="1147.08" y="512.58" width="1.745" height="172.07" fill="#fdeea0"/><rect x="1148.83" y="836.09" width="4.0" height="34.41" fill="#a2cee9"/><rect x="1152.83" y="836.09" width="1.745" height="34.41" fill="#d6f8ff"/><rect x="1148.83" y="815.44" width="4.0" height="20.65" fill="#43a5d6"/><rect x="1152.83" y="815.44" width="1.745" height="20.65" fill="#a2f0ff"/><rect x="1148.83" y="670.89" width="4.0" height="144.54" fill="#2181c1"/><rect x="1152.83" y="670.89" width="1.745" height="144.54" fill="#90ecfc"/><rect x="1148.83" y="505.70" width="4.0" height="165.19" fill="#ebc766"/><rect x="1152.83" y="505.70" width="1.745" height="165.19" fill="#fdeea0"/><rect x="1154.57" y="842.97" width="4.0" height="27.53" fill="#a2cee9"/><rect x="1158.57" y="842.97" width="1.745" height="27.53" fill="#d6f8ff"/><rect x="1154.57" y="815.44" width="4.0" height="27.53" fill="#43a5d6"/><rect x="1158.57" y="815.44" width="1.745" height="27.53" fill="#a2f0ff"/><rect x="1154.57" y="664.01" width="4.0" height="151.43" fill="#2181c1"/><rect x="1158.57" y="664.01" width="1.745" height="151.43" fill="#90ecfc"/><rect x="1154.57" y="505.70" width="4.0" height="158.31" fill="#ebc766"/><rect x="1158.57" y="505.70" width="1.745" height="158.31" fill="#fdeea0"/><rect x="1160.32" y="842.97" width="4.0" height="27.53" fill="#a2cee9"/><rect x="1164.32" y="842.97" width="1.745" height="27.53" fill="#d6f8ff"/><rect x="1160.32" y="815.44" width="4.0" height="27.53" fill="#43a5d6"/><rect x="1164.32" y="815.44" width="1.745" height="27.53" fill="#a2f0ff"/><rect x="1160.32" y="670.89" width="4.0" height="144.54" fill="#2181c1"/><rect x="1164.32" y="670.89" width="1.745" height="144.54" fill="#90ecfc"/><rect x="1160.32" y="512.58" width="4.0" height="158.31" fill="#ebc766"/><rect x="1164.32" y="512.58" width="1.745" height="158.31" fill="#fdeea0"/><rect x="1166.06" y="849.85" width="4.0" height="20.65" fill="#a2cee9"/><rect x="1170.06" y="849.85" width="1.745" height="20.65" fill="#d6f8ff"/><rect x="1166.06" y="815.44" width="4.0" height="34.41" fill="#43a5d6"/><rect x="1170.06" y="815.44" width="1.745" height="34.41" fill="#a2f0ff"/><rect x="1166.06" y="684.66" width="4.0" height="130.78" fill="#2181c1"/><rect x="1170.06" y="684.66" width="1.745" height="130.78" fill="#90ecfc"/><rect x="1166.06" y="512.58" width="4.0" height="172.07" fill="#ebc766"/><rect x="1170.06" y="512.58" width="1.745" height="172.07" fill="#fdeea0"/><rect x="1171.81" y="849.85" width="4.0" height="20.65" fill="#a2cee9"/><rect x="1175.81" y="849.85" width="1.745" height="20.65" fill="#d6f8ff"/><rect x="1171.81" y="808.55" width="4.0" height="41.30" fill="#43a5d6"/><rect x="1175.81" y="808.55" width="1.745" height="41.30" fill="#a2f0ff"/><rect x="1171.81" y="670.89" width="4.0" height="137.66" fill="#2181c1"/><rect x="1175.81" y="670.89" width="1.745" height="137.66" fill="#90ecfc"/><rect x="1171.81" y="512.58" width="4.0" height="158.31" fill="#ebc766"/><rect x="1175.81" y="512.58" width="1.745" height="158.31" fill="#fdeea0"/><rect x="1177.55" y="842.97" width="4.0" height="27.53" fill="#a2cee9"/><rect x="1181.55" y="842.97" width="1.745" height="27.53" fill="#d6f8ff"/><rect x="1177.55" y="808.55" width="4.0" height="34.41" fill="#43a5d6"/><rect x="1181.55" y="808.55" width="1.745" height="34.41" fill="#a2f0ff"/><rect x="1177.55" y="677.78" width="4.0" height="130.78" fill="#2181c1"/><rect x="1181.55" y="677.78" width="1.745" height="130.78" fill="#90ecfc"/><rect x="1177.55" y="512.58" width="4.0" height="165.19" fill="#ebc766"/><rect x="1181.55" y="512.58" width="1.745" height="165.19" fill="#fdeea0"/><rect x="1183.30" y="829.20" width="4.0" height="41.30" fill="#a2cee9"/><rect x="1187.30" y="829.20" width="1.745" height="41.30" fill="#d6f8ff"/><rect x="1183.30" y="808.55" width="4.0" height="20.65" fill="#43a5d6"/><rect x="1187.30" y="808.55" width="1.745" height="20.65" fill="#a2f0ff"/><rect x="1183.30" y="691.54" width="4.0" height="117.01" fill="#2181c1"/><rect x="1187.30" y="691.54" width="1.745" height="117.01" fill="#90ecfc"/><rect x="1183.30" y="512.58" width="4.0" height="178.96" fill="#ebc766"/><rect x="1187.30" y="512.58" width="1.745" height="178.96" fill="#fdeea0"/><rect x="1189.04" y="829.20" width="4.0" height="41.30" fill="#a2cee9"/><rect x="1193.04" y="829.20" width="1.745" height="41.30" fill="#d6f8ff"/><rect x="1189.04" y="794.79" width="4.0" height="34.41" fill="#43a5d6"/><rect x="1193.04" y="794.79" width="1.745" height="34.41" fill="#a2f0ff"/><rect x="1189.04" y="705.31" width="4.0" height="89.48" fill="#2181c1"/><rect x="1193.04" y="705.31" width="1.745" height="89.48" fill="#90ecfc"/><rect x="1189.04" y="505.70" width="4.0" height="199.61" fill="#ebc766"/><rect x="1193.04" y="505.70" width="1.745" height="199.61" fill="#fdeea0"/><rect x="1194.78" y="829.20" width="4.0" height="41.30" fill="#a2cee9"/><rect x="1198.78" y="829.20" width="1.745" height="41.30" fill="#d6f8ff"/><rect x="1194.78" y="808.55" width="4.0" height="20.65" fill="#43a5d6"/><rect x="1198.78" y="808.55" width="1.745" height="20.65" fill="#a2f0ff"/><rect x="1194.78" y="698.42" width="4.0" height="110.13" fill="#2181c1"/><rect x="1198.78" y="698.42" width="1.745" height="110.13" fill="#90ecfc"/><rect x="1194.78" y="505.70" width="4.0" height="192.72" fill="#ebc766"/><rect x="1198.78" y="505.70" width="1.745" height="192.72" fill="#fdeea0"/><rect x="1200.53" y="829.20" width="4.0" height="41.30" fill="#a2cee9"/><rect x="1204.53" y="829.20" width="1.745" height="41.30" fill="#d6f8ff"/><rect x="1200.53" y="794.79" width="4.0" height="34.41" fill="#43a5d6"/><rect x="1204.53" y="794.79" width="1.745" height="34.41" fill="#a2f0ff"/><rect x="1200.53" y="677.78" width="4.0" height="117.01" fill="#2181c1"/><rect x="1204.53" y="677.78" width="1.745" height="117.01" fill="#90ecfc"/><rect x="1200.53" y="505.70" width="4.0" height="172.08" fill="#ebc766"/><rect x="1204.53" y="505.70" width="1.745" height="172.08" fill="#fdeea0"/><rect x="1206.28" y="822.32" width="4.0" height="48.18" fill="#a2cee9"/><rect x="1210.28" y="822.32" width="1.745" height="48.18" fill="#d6f8ff"/><rect x="1206.28" y="808.55" width="4.0" height="13.77" fill="#43a5d6"/><rect x="1210.28" y="808.55" width="1.745" height="13.77" fill="#a2f0ff"/><rect x="1206.28" y="698.42" width="4.0" height="110.13" fill="#2181c1"/><rect x="1210.28" y="698.42" width="1.745" height="110.13" fill="#90ecfc"/><rect x="1206.28" y="512.58" width="4.0" height="185.84" fill="#ebc766"/><rect x="1210.28" y="512.58" width="1.745" height="185.84" fill="#fdeea0"/><rect x="1212.02" y="822.32" width="4.0" height="48.18" fill="#a2cee9"/><rect x="1216.02" y="822.32" width="1.745" height="48.18" fill="#d6f8ff"/><rect x="1212.02" y="808.55" width="4.0" height="13.77" fill="#43a5d6"/><rect x="1216.02" y="808.55" width="1.745" height="13.77" fill="#a2f0ff"/><rect x="1212.02" y="691.54" width="4.0" height="117.01" fill="#2181c1"/><rect x="1216.02" y="691.54" width="1.745" height="117.01" fill="#90ecfc"/><rect x="1212.02" y="505.70" width="4.0" height="185.84" fill="#ebc766"/><rect x="1216.02" y="505.70" width="1.745" height="185.84" fill="#fdeea0"/><rect x="1217.76" y="815.44" width="4.0" height="55.06" fill="#a2cee9"/><rect x="1221.76" y="815.44" width="1.745" height="55.06" fill="#d6f8ff"/><rect x="1217.76" y="794.79" width="4.0" height="20.65" fill="#43a5d6"/><rect x="1221.76" y="794.79" width="1.745" height="20.65" fill="#a2f0ff"/><rect x="1217.76" y="691.54" width="4.0" height="103.25" fill="#2181c1"/><rect x="1221.76" y="691.54" width="1.745" height="103.25" fill="#90ecfc"/><rect x="1217.76" y="498.82" width="4.0" height="192.72" fill="#ebc766"/><rect x="1221.76" y="498.82" width="1.745" height="192.72" fill="#fdeea0"/><rect x="1223.51" y="822.32" width="4.0" height="48.18" fill="#a2cee9"/><rect x="1227.51" y="822.32" width="1.745" height="48.18" fill="#d6f8ff"/><rect x="1223.51" y="808.55" width="4.0" height="13.77" fill="#43a5d6"/><rect x="1227.51" y="808.55" width="1.745" height="13.77" fill="#a2f0ff"/><rect x="1223.51" y="698.42" width="4.0" height="110.13" fill="#2181c1"/><rect x="1227.51" y="698.42" width="1.745" height="110.13" fill="#90ecfc"/><rect x="1223.51" y="505.70" width="4.0" height="192.72" fill="#ebc766"/><rect x="1227.51" y="505.70" width="1.745" height="192.72" fill="#fdeea0"/><rect x="1229.26" y="822.32" width="4.0" height="48.18" fill="#a2cee9"/><rect x="1233.26" y="822.32" width="1.745" height="48.18" fill="#d6f8ff"/><rect x="1229.26" y="808.55" width="4.0" height="13.77" fill="#43a5d6"/><rect x="1233.26" y="808.55" width="1.745" height="13.77" fill="#a2f0ff"/><rect x="1229.26" y="705.31" width="4.0" height="103.25" fill="#2181c1"/><rect x="1233.26" y="705.31" width="1.745" height="103.25" fill="#90ecfc"/><rect x="1229.26" y="505.70" width="4.0" height="199.61" fill="#ebc766"/><rect x="1233.26" y="505.70" width="1.745" height="199.61" fill="#fdeea0"/><rect x="1235.00" y="829.20" width="4.0" height="41.30" fill="#a2cee9"/><rect x="1239.00" y="829.20" width="1.745" height="41.30" fill="#d6f8ff"/><rect x="1235.00" y="801.67" width="4.0" height="27.53" fill="#43a5d6"/><rect x="1239.00" y="801.67" width="1.745" height="27.53" fill="#a2f0ff"/><rect x="1235.00" y="698.42" width="4.0" height="103.25" fill="#2181c1"/><rect x="1239.00" y="698.42" width="1.745" height="103.25" fill="#90ecfc"/><rect x="1235.00" y="505.70" width="4.0" height="192.72" fill="#ebc766"/><rect x="1239.00" y="505.70" width="1.745" height="192.72" fill="#fdeea0"/><rect x="1240.74" y="822.32" width="4.0" height="48.18" fill="#a2cee9"/><rect x="1244.74" y="822.32" width="1.745" height="48.18" fill="#d6f8ff"/><rect x="1240.74" y="801.67" width="4.0" height="20.65" fill="#43a5d6"/><rect x="1244.74" y="801.67" width="1.745" height="20.65" fill="#a2f0ff"/><rect x="1240.74" y="712.19" width="4.0" height="89.48" fill="#2181c1"/><rect x="1244.74" y="712.19" width="1.745" height="89.48" fill="#90ecfc"/><rect x="1240.74" y="505.70" width="4.0" height="206.49" fill="#ebc766"/><rect x="1244.74" y="505.70" width="1.745" height="206.49" fill="#fdeea0"/><rect x="1246.49" y="822.32" width="4.0" height="48.18" fill="#a2cee9"/><rect x="1250.49" y="822.32" width="1.745" height="48.18" fill="#d6f8ff"/><rect x="1246.49" y="794.79" width="4.0" height="27.53" fill="#43a5d6"/><rect x="1250.49" y="794.79" width="1.745" height="27.53" fill="#a2f0ff"/><rect x="1246.49" y="698.42" width="4.0" height="96.36" fill="#2181c1"/><rect x="1250.49" y="698.42" width="1.745" height="96.36" fill="#90ecfc"/><rect x="1246.49" y="505.70" width="4.0" height="192.72" fill="#ebc766"/><rect x="1250.49" y="505.70" width="1.745" height="192.72" fill="#fdeea0"/><rect x="1252.24" y="822.32" width="4.0" height="48.18" fill="#a2cee9"/><rect x="1256.24" y="822.32" width="1.745" height="48.18" fill="#d6f8ff"/><rect x="1252.24" y="808.55" width="4.0" height="13.77" fill="#43a5d6"/><rect x="1256.24" y="808.55" width="1.745" height="13.77" fill="#a2f0ff"/><rect x="1252.24" y="712.19" width="4.0" height="96.36" fill="#2181c1"/><rect x="1256.24" y="712.19" width="1.745" height="96.36" fill="#90ecfc"/><rect x="1252.24" y="512.58" width="4.0" height="199.61" fill="#ebc766"/><rect x="1256.24" y="512.58" width="1.745" height="199.61" fill="#fdeea0"/><rect x="1257.98" y="822.32" width="4.0" height="48.18" fill="#a2cee9"/><rect x="1261.98" y="822.32" width="1.745" height="48.18" fill="#d6f8ff"/><rect x="1257.98" y="801.67" width="4.0" height="20.65" fill="#43a5d6"/><rect x="1261.98" y="801.67" width="1.745" height="20.65" fill="#a2f0ff"/><rect x="1257.98" y="712.19" width="4.0" height="89.48" fill="#2181c1"/><rect x="1261.98" y="712.19" width="1.745" height="89.48" fill="#90ecfc"/><rect x="1257.98" y="505.70" width="4.0" height="206.49" fill="#ebc766"/><rect x="1261.98" y="505.70" width="1.745" height="206.49" fill="#fdeea0"/><rect x="1263.72" y="822.32" width="4.0" height="48.18" fill="#a2cee9"/><rect x="1267.72" y="822.32" width="1.745" height="48.18" fill="#d6f8ff"/><rect x="1263.72" y="801.67" width="4.0" height="20.65" fill="#43a5d6"/><rect x="1267.72" y="801.67" width="1.745" height="20.65" fill="#a2f0ff"/><rect x="1263.72" y="712.19" width="4.0" height="89.48" fill="#2181c1"/><rect x="1267.72" y="712.19" width="1.745" height="89.48" fill="#90ecfc"/><rect x="1263.72" y="505.70" width="4.0" height="206.49" fill="#ebc766"/><rect x="1267.72" y="505.70" width="1.745" height="206.49" fill="#fdeea0"/><rect x="1269.47" y="829.20" width="4.0" height="41.30" fill="#a2cee9"/><rect x="1273.47" y="829.20" width="1.745" height="41.30" fill="#d6f8ff"/><rect x="1269.47" y="808.55" width="4.0" height="20.65" fill="#43a5d6"/><rect x="1273.47" y="808.55" width="1.745" height="20.65" fill="#a2f0ff"/><rect x="1269.47" y="698.42" width="4.0" height="110.13" fill="#2181c1"/><rect x="1273.47" y="698.42" width="1.745" height="110.13" fill="#90ecfc"/><rect x="1269.47" y="505.70" width="4.0" height="192.72" fill="#ebc766"/><rect x="1273.47" y="505.70" width="1.745" height="192.72" fill="#fdeea0"/><rect x="1275.22" y="829.20" width="4.0" height="41.30" fill="#a2cee9"/><rect x="1279.22" y="829.20" width="1.745" height="41.30" fill="#d6f8ff"/><rect x="1275.22" y="801.67" width="4.0" height="27.53" fill="#43a5d6"/><rect x="1279.22" y="801.67" width="1.745" height="27.53" fill="#a2f0ff"/><rect x="1275.22" y="698.42" width="4.0" height="103.25" fill="#2181c1"/><rect x="1279.22" y="698.42" width="1.745" height="103.25" fill="#90ecfc"/><rect x="1275.22" y="498.82" width="4.0" height="199.61" fill="#ebc766"/><rect x="1279.22" y="498.82" width="1.745" height="199.61" fill="#fdeea0"/><rect x="1280.96" y="822.32" width="4.0" height="48.18" fill="#a2cee9"/><rect x="1284.96" y="822.32" width="1.745" height="48.18" fill="#d6f8ff"/><rect x="1280.96" y="801.67" width="4.0" height="20.65" fill="#43a5d6"/><rect x="1284.96" y="801.67" width="1.745" height="20.65" fill="#a2f0ff"/><rect x="1280.96" y="712.19" width="4.0" height="89.48" fill="#2181c1"/><rect x="1284.96" y="712.19" width="1.745" height="89.48" fill="#90ecfc"/><rect x="1280.96" y="505.70" width="4.0" height="206.49" fill="#ebc766"/><rect x="1284.96" y="505.70" width="1.745" height="206.49" fill="#fdeea0"/><rect x="1286.70" y="822.32" width="4.0" height="48.18" fill="#a2cee9"/><rect x="1290.70" y="822.32" width="1.745" height="48.18" fill="#d6f8ff"/><rect x="1286.70" y="808.55" width="4.0" height="13.77" fill="#43a5d6"/><rect x="1290.70" y="808.55" width="1.745" height="13.77" fill="#a2f0ff"/><rect x="1286.70" y="698.42" width="4.0" height="110.13" fill="#2181c1"/><rect x="1290.70" y="698.42" width="1.745" height="110.13" fill="#90ecfc"/><rect x="1286.70" y="505.70" width="4.0" height="192.72" fill="#ebc766"/><rect x="1290.70" y="505.70" width="1.745" height="192.72" fill="#fdeea0"/><rect x="1292.45" y="822.32" width="4.0" height="48.18" fill="#a2cee9"/><rect x="1296.45" y="822.32" width="1.745" height="48.18" fill="#d6f8ff"/><rect x="1292.45" y="801.67" width="4.0" height="20.65" fill="#43a5d6"/><rect x="1296.45" y="801.67" width="1.745" height="20.65" fill="#a2f0ff"/><rect x="1292.45" y="705.31" width="4.0" height="96.36" fill="#2181c1"/><rect x="1296.45" y="705.31" width="1.745" height="96.36" fill="#90ecfc"/><rect x="1292.45" y="505.70" width="4.0" height="199.61" fill="#ebc766"/><rect x="1296.45" y="505.70" width="1.745" height="199.61" fill="#fdeea0"/><rect x="1298.20" y="829.20" width="4.0" height="41.30" fill="#a2cee9"/><rect x="1302.20" y="829.20" width="1.745" height="41.30" fill="#d6f8ff"/><rect x="1298.20" y="808.55" width="4.0" height="20.65" fill="#43a5d6"/><rect x="1302.20" y="808.55" width="1.745" height="20.65" fill="#a2f0ff"/><rect x="1298.20" y="705.31" width="4.0" height="103.25" fill="#2181c1"/><rect x="1302.20" y="705.31" width="1.745" height="103.25" fill="#90ecfc"/><rect x="1298.20" y="505.70" width="4.0" height="199.61" fill="#ebc766"/><rect x="1302.20" y="505.70" width="1.745" height="199.61" fill="#fdeea0"/><rect x="1303.94" y="822.32" width="4.0" height="48.18" fill="#a2cee9"/><rect x="1307.94" y="822.32" width="1.745" height="48.18" fill="#d6f8ff"/><rect x="1303.94" y="801.67" width="4.0" height="20.65" fill="#43a5d6"/><rect x="1307.94" y="801.67" width="1.745" height="20.65" fill="#a2f0ff"/><rect x="1303.94" y="698.42" width="4.0" height="103.25" fill="#2181c1"/><rect x="1307.94" y="698.42" width="1.745" height="103.25" fill="#90ecfc"/><rect x="1303.94" y="498.82" width="4.0" height="199.61" fill="#ebc766"/><rect x="1307.94" y="498.82" width="1.745" height="199.61" fill="#fdeea0"/><rect x="1309.68" y="836.09" width="4.0" height="34.41" fill="#a2cee9"/><rect x="1313.68" y="836.09" width="1.745" height="34.41" fill="#d6f8ff"/><rect x="1309.68" y="794.79" width="4.0" height="41.30" fill="#43a5d6"/><rect x="1313.68" y="794.79" width="1.745" height="41.30" fill="#a2f0ff"/><rect x="1309.68" y="705.31" width="4.0" height="89.48" fill="#2181c1"/><rect x="1313.68" y="705.31" width="1.745" height="89.48" fill="#90ecfc"/><rect x="1309.68" y="505.70" width="4.0" height="199.61" fill="#ebc766"/><rect x="1313.68" y="505.70" width="1.745" height="199.61" fill="#fdeea0"/><rect x="1315.43" y="836.09" width="4.0" height="34.41" fill="#a2cee9"/><rect x="1319.43" y="836.09" width="1.745" height="34.41" fill="#d6f8ff"/><rect x="1315.43" y="801.67" width="4.0" height="34.42" fill="#43a5d6"/><rect x="1319.43" y="801.67" width="1.745" height="34.42" fill="#a2f0ff"/><rect x="1315.43" y="698.42" width="4.0" height="103.25" fill="#2181c1"/><rect x="1319.43" y="698.42" width="1.745" height="103.25" fill="#90ecfc"/><rect x="1315.43" y="505.70" width="4.0" height="192.72" fill="#ebc766"/><rect x="1319.43" y="505.70" width="1.745" height="192.72" fill="#fdeea0"/><rect x="1321.18" y="836.09" width="4.0" height="34.41" fill="#a2cee9"/><rect x="1325.18" y="836.09" width="1.745" height="34.41" fill="#d6f8ff"/><rect x="1321.18" y="801.67" width="4.0" height="34.42" fill="#43a5d6"/><rect x="1325.18" y="801.67" width="1.745" height="34.42" fill="#a2f0ff"/><rect x="1321.18" y="719.07" width="4.0" height="82.60" fill="#2181c1"/><rect x="1325.18" y="719.07" width="1.745" height="82.60" fill="#90ecfc"/><rect x="1321.18" y="505.70" width="4.0" height="213.37" fill="#ebc766"/><rect x="1325.18" y="505.70" width="1.745" height="213.37" fill="#fdeea0"/><rect x="1326.92" y="829.20" width="4.0" height="41.30" fill="#a2cee9"/><rect x="1330.92" y="829.20" width="1.745" height="41.30" fill="#d6f8ff"/><rect x="1326.92" y="801.67" width="4.0" height="27.53" fill="#43a5d6"/><rect x="1330.92" y="801.67" width="1.745" height="27.53" fill="#a2f0ff"/><rect x="1326.92" y="705.31" width="4.0" height="96.36" fill="#2181c1"/><rect x="1330.92" y="705.31" width="1.745" height="96.36" fill="#90ecfc"/><rect x="1326.92" y="505.70" width="4.0" height="199.61" fill="#ebc766"/><rect x="1330.92" y="505.70" width="1.745" height="199.61" fill="#fdeea0"/><rect x="1332.66" y="836.09" width="4.0" height="34.41" fill="#a2cee9"/><rect x="1336.66" y="836.09" width="1.745" height="34.41" fill="#d6f8ff"/><rect x="1332.66" y="801.67" width="4.0" height="34.42" fill="#43a5d6"/><rect x="1336.66" y="801.67" width="1.745" height="34.42" fill="#a2f0ff"/><rect x="1332.66" y="705.31" width="4.0" height="96.36" fill="#2181c1"/><rect x="1336.66" y="705.31" width="1.745" height="96.36" fill="#90ecfc"/><rect x="1332.66" y="505.70" width="4.0" height="199.61" fill="#ebc766"/><rect x="1336.66" y="505.70" width="1.745" height="199.61" fill="#fdeea0"/><rect x="1338.41" y="829.20" width="4.0" height="41.30" fill="#a2cee9"/><rect x="1342.41" y="829.20" width="1.745" height="41.30" fill="#d6f8ff"/><rect x="1338.41" y="808.55" width="4.0" height="20.65" fill="#43a5d6"/><rect x="1342.41" y="808.55" width="1.745" height="20.65" fill="#a2f0ff"/><rect x="1338.41" y="698.42" width="4.0" height="110.13" fill="#2181c1"/><rect x="1342.41" y="698.42" width="1.745" height="110.13" fill="#90ecfc"/><rect x="1338.41" y="498.82" width="4.0" height="199.61" fill="#ebc766"/><rect x="1342.41" y="498.82" width="1.745" height="199.61" fill="#fdeea0"/><rect x="1344.15" y="836.09" width="4.0" height="34.41" fill="#a2cee9"/><rect x="1348.15" y="836.09" width="1.745" height="34.41" fill="#d6f8ff"/><rect x="1344.15" y="794.79" width="4.0" height="41.30" fill="#43a5d6"/><rect x="1348.15" y="794.79" width="1.745" height="41.30" fill="#a2f0ff"/><rect x="1344.15" y="712.19" width="4.0" height="82.60" fill="#2181c1"/><rect x="1348.15" y="712.19" width="1.745" height="82.60" fill="#90ecfc"/><rect x="1344.15" y="505.70" width="4.0" height="206.49" fill="#ebc766"/><rect x="1348.15" y="505.70" width="1.745" height="206.49" fill="#fdeea0"/><rect x="1349.90" y="822.32" width="4.0" height="48.18" fill="#a2cee9"/><rect x="1353.90" y="822.32" width="1.745" height="48.18" fill="#d6f8ff"/><rect x="1349.90" y="781.02" width="4.0" height="41.30" fill="#43a5d6"/><rect x="1353.90" y="781.02" width="1.745" height="41.30" fill="#a2f0ff"/><rect x="1349.90" y="705.31" width="4.0" height="75.71" fill="#2181c1"/><rect x="1353.90" y="705.31" width="1.745" height="75.71" fill="#90ecfc"/><rect x="1349.90" y="498.82" width="4.0" height="206.49" fill="#ebc766"/><rect x="1353.90" y="498.82" width="1.745" height="206.49" fill="#fdeea0"/><rect x="1355.64" y="836.09" width="4.0" height="34.41" fill="#a2cee9"/><rect x="1359.64" y="836.09" width="1.745" height="34.41" fill="#d6f8ff"/><rect x="1355.64" y="801.67" width="4.0" height="34.42" fill="#43a5d6"/><rect x="1359.64" y="801.67" width="1.745" height="34.42" fill="#a2f0ff"/><rect x="1355.64" y="705.31" width="4.0" height="96.36" fill="#2181c1"/><rect x="1359.64" y="705.31" width="1.745" height="96.36" fill="#90ecfc"/><rect x="1355.64" y="505.70" width="4.0" height="199.61" fill="#ebc766"/><rect x="1359.64" y="505.70" width="1.745" height="199.61" fill="#fdeea0"/><rect x="1361.39" y="829.20" width="4.0" height="41.30" fill="#a2cee9"/><rect x="1365.39" y="829.20" width="1.745" height="41.30" fill="#d6f8ff"/><rect x="1361.39" y="787.90" width="4.0" height="41.30" fill="#43a5d6"/><rect x="1365.39" y="787.90" width="1.745" height="41.30" fill="#a2f0ff"/><rect x="1361.39" y="705.31" width="4.0" height="82.60" fill="#2181c1"/><rect x="1365.39" y="705.31" width="1.745" height="82.60" fill="#90ecfc"/><rect x="1361.39" y="498.82" width="4.0" height="206.49" fill="#ebc766"/><rect x="1365.39" y="498.82" width="1.745" height="206.49" fill="#fdeea0"/><rect x="1367.13" y="829.20" width="4.0" height="41.30" fill="#a2cee9"/><rect x="1371.13" y="829.20" width="1.745" height="41.30" fill="#d6f8ff"/><rect x="1367.13" y="794.79" width="4.0" height="34.41" fill="#43a5d6"/><rect x="1371.13" y="794.79" width="1.745" height="34.41" fill="#a2f0ff"/><rect x="1367.13" y="705.31" width="4.0" height="89.48" fill="#2181c1"/><rect x="1371.13" y="705.31" width="1.745" height="89.48" fill="#90ecfc"/><rect x="1367.13" y="498.82" width="4.0" height="206.49" fill="#ebc766"/><rect x="1371.13" y="498.82" width="1.745" height="206.49" fill="#fdeea0"/><rect x="1372.88" y="836.09" width="4.0" height="34.41" fill="#a2cee9"/><rect x="1376.88" y="836.09" width="1.745" height="34.41" fill="#d6f8ff"/><rect x="1372.88" y="794.79" width="4.0" height="41.30" fill="#43a5d6"/><rect x="1376.88" y="794.79" width="1.745" height="41.30" fill="#a2f0ff"/><rect x="1372.88" y="691.54" width="4.0" height="103.25" fill="#2181c1"/><rect x="1376.88" y="691.54" width="1.745" height="103.25" fill="#90ecfc"/><rect x="1372.88" y="505.70" width="4.0" height="185.84" fill="#ebc766"/><rect x="1376.88" y="505.70" width="1.745" height="185.84" fill="#fdeea0"/><rect x="1378.62" y="836.09" width="4.0" height="34.41" fill="#a2cee9"/><rect x="1382.62" y="836.09" width="1.745" height="34.41" fill="#d6f8ff"/><rect x="1378.62" y="794.79" width="4.0" height="41.30" fill="#43a5d6"/><rect x="1382.62" y="794.79" width="1.745" height="41.30" fill="#a2f0ff"/><rect x="1378.62" y="712.19" width="4.0" height="82.60" fill="#2181c1"/><rect x="1382.62" y="712.19" width="1.745" height="82.60" fill="#90ecfc"/><rect x="1378.62" y="505.70" width="4.0" height="206.49" fill="#ebc766"/><rect x="1382.62" y="505.70" width="1.745" height="206.49" fill="#fdeea0"/><rect x="1384.37" y="836.09" width="4.0" height="34.41" fill="#a2cee9"/><rect x="1388.37" y="836.09" width="1.745" height="34.41" fill="#d6f8ff"/><rect x="1384.37" y="801.67" width="4.0" height="34.42" fill="#43a5d6"/><rect x="1388.37" y="801.67" width="1.745" height="34.42" fill="#a2f0ff"/><rect x="1384.37" y="712.19" width="4.0" height="89.48" fill="#2181c1"/><rect x="1388.37" y="712.19" width="1.745" height="89.48" fill="#90ecfc"/><rect x="1384.37" y="505.70" width="4.0" height="206.49" fill="#ebc766"/><rect x="1388.37" y="505.70" width="1.745" height="206.49" fill="#fdeea0"/><rect x="1390.12" y="829.20" width="4.0" height="41.30" fill="#a2cee9"/><rect x="1394.12" y="829.20" width="1.745" height="41.30" fill="#d6f8ff"/><rect x="1390.12" y="794.79" width="4.0" height="34.41" fill="#43a5d6"/><rect x="1394.12" y="794.79" width="1.745" height="34.41" fill="#a2f0ff"/><rect x="1390.12" y="712.19" width="4.0" height="82.60" fill="#2181c1"/><rect x="1394.12" y="712.19" width="1.745" height="82.60" fill="#90ecfc"/><rect x="1390.12" y="505.70" width="4.0" height="206.49" fill="#ebc766"/><rect x="1394.12" y="505.70" width="1.745" height="206.49" fill="#fdeea0"/><rect x="1395.86" y="829.20" width="4.0" height="41.30" fill="#a2cee9"/><rect x="1399.86" y="829.20" width="1.745" height="41.30" fill="#d6f8ff"/><rect x="1395.86" y="801.67" width="4.0" height="27.53" fill="#43a5d6"/><rect x="1399.86" y="801.67" width="1.745" height="27.53" fill="#a2f0ff"/><rect x="1395.86" y="705.31" width="4.0" height="96.36" fill="#2181c1"/><rect x="1399.86" y="705.31" width="1.745" height="96.36" fill="#90ecfc"/><rect x="1395.86" y="505.70" width="4.0" height="199.61" fill="#ebc766"/><rect x="1399.86" y="505.70" width="1.745" height="199.61" fill="#fdeea0"/><rect x="1401.61" y="836.09" width="4.0" height="34.41" fill="#a2cee9"/><rect x="1405.61" y="836.09" width="1.745" height="34.41" fill="#d6f8ff"/><rect x="1401.61" y="794.79" width="4.0" height="41.30" fill="#43a5d6"/><rect x="1405.61" y="794.79" width="1.745" height="41.30" fill="#a2f0ff"/><rect x="1401.61" y="705.31" width="4.0" height="89.48" fill="#2181c1"/><rect x="1405.61" y="705.31" width="1.745" height="89.48" fill="#90ecfc"/><rect x="1401.61" y="498.82" width="4.0" height="206.49" fill="#ebc766"/><rect x="1405.61" y="498.82" width="1.745" height="206.49" fill="#fdeea0"/><rect x="1407.35" y="836.09" width="4.0" height="34.41" fill="#a2cee9"/><rect x="1411.35" y="836.09" width="1.745" height="34.41" fill="#d6f8ff"/><rect x="1407.35" y="801.67" width="4.0" height="34.42" fill="#43a5d6"/><rect x="1411.35" y="801.67" width="1.745" height="34.42" fill="#a2f0ff"/><rect x="1407.35" y="705.31" width="4.0" height="96.36" fill="#2181c1"/><rect x="1411.35" y="705.31" width="1.745" height="96.36" fill="#90ecfc"/><rect x="1407.35" y="505.70" width="4.0" height="199.61" fill="#ebc766"/><rect x="1411.35" y="505.70" width="1.745" height="199.61" fill="#fdeea0"/><rect x="1413.10" y="836.09" width="4.0" height="34.41" fill="#a2cee9"/><rect x="1417.10" y="836.09" width="1.745" height="34.41" fill="#d6f8ff"/><rect x="1413.10" y="801.67" width="4.0" height="34.42" fill="#43a5d6"/><rect x="1417.10" y="801.67" width="1.745" height="34.42" fill="#a2f0ff"/><rect x="1413.10" y="712.19" width="4.0" height="89.48" fill="#2181c1"/><rect x="1417.10" y="712.19" width="1.745" height="89.48" fill="#90ecfc"/><rect x="1413.10" y="505.70" width="4.0" height="206.49" fill="#ebc766"/><rect x="1417.10" y="505.70" width="1.745" height="206.49" fill="#fdeea0"/><rect x="1418.84" y="836.09" width="4.0" height="34.41" fill="#a2cee9"/><rect x="1422.84" y="836.09" width="1.745" height="34.41" fill="#d6f8ff"/><rect x="1418.84" y="801.67" width="4.0" height="34.42" fill="#43a5d6"/><rect x="1422.84" y="801.67" width="1.745" height="34.42" fill="#a2f0ff"/><rect x="1418.84" y="698.42" width="4.0" height="103.25" fill="#2181c1"/><rect x="1422.84" y="698.42" width="1.745" height="103.25" fill="#90ecfc"/><rect x="1418.84" y="505.70" width="4.0" height="192.72" fill="#ebc766"/><rect x="1422.84" y="505.70" width="1.745" height="192.72" fill="#fdeea0"/><rect x="1424.59" y="836.09" width="4.0" height="34.41" fill="#a2cee9"/><rect x="1428.59" y="836.09" width="1.745" height="34.41" fill="#d6f8ff"/><rect x="1424.59" y="801.67" width="4.0" height="34.42" fill="#43a5d6"/><rect x="1428.59" y="801.67" width="1.745" height="34.42" fill="#a2f0ff"/><rect x="1424.59" y="691.54" width="4.0" height="110.13" fill="#2181c1"/><rect x="1428.59" y="691.54" width="1.745" height="110.13" fill="#90ecfc"/><rect x="1424.59" y="505.70" width="4.0" height="185.84" fill="#ebc766"/><rect x="1428.59" y="505.70" width="1.745" height="185.84" fill="#fdeea0"/><rect x="1430.33" y="836.09" width="4.0" height="34.41" fill="#a2cee9"/><rect x="1434.33" y="836.09" width="1.745" height="34.41" fill="#d6f8ff"/><rect x="1430.33" y="808.55" width="4.0" height="27.53" fill="#43a5d6"/><rect x="1434.33" y="808.55" width="1.745" height="27.53" fill="#a2f0ff"/><rect x="1430.33" y="705.31" width="4.0" height="103.25" fill="#2181c1"/><rect x="1434.33" y="705.31" width="1.745" height="103.25" fill="#90ecfc"/><rect x="1430.33" y="505.70" width="4.0" height="199.61" fill="#ebc766"/><rect x="1434.33" y="505.70" width="1.745" height="199.61" fill="#fdeea0"/><rect x="1436.08" y="836.09" width="4.0" height="34.41" fill="#a2cee9"/><rect x="1440.08" y="836.09" width="1.745" height="34.41" fill="#d6f8ff"/><rect x="1436.08" y="801.67" width="4.0" height="34.42" fill="#43a5d6"/><rect x="1440.08" y="801.67" width="1.745" height="34.42" fill="#a2f0ff"/><rect x="1436.08" y="712.19" width="4.0" height="89.48" fill="#2181c1"/><rect x="1440.08" y="712.19" width="1.745" height="89.48" fill="#90ecfc"/><rect x="1436.08" y="512.58" width="4.0" height="199.61" fill="#ebc766"/><rect x="1440.08" y="512.58" width="1.745" height="199.61" fill="#fdeea0"/><rect x="1441.82" y="836.09" width="4.0" height="34.41" fill="#a2cee9"/><rect x="1445.82" y="836.09" width="1.745" height="34.41" fill="#d6f8ff"/><rect x="1441.82" y="801.67" width="4.0" height="34.42" fill="#43a5d6"/><rect x="1445.82" y="801.67" width="1.745" height="34.42" fill="#a2f0ff"/><rect x="1441.82" y="705.31" width="4.0" height="96.36" fill="#2181c1"/><rect x="1445.82" y="705.31" width="1.745" height="96.36" fill="#90ecfc"/><rect x="1441.82" y="505.70" width="4.0" height="199.61" fill="#ebc766"/><rect x="1445.82" y="505.70" width="1.745" height="199.61" fill="#fdeea0"/><rect x="1447.57" y="836.09" width="4.0" height="34.41" fill="#a2cee9"/><rect x="1451.57" y="836.09" width="1.745" height="34.41" fill="#d6f8ff"/><rect x="1447.57" y="801.67" width="4.0" height="34.42" fill="#43a5d6"/><rect x="1451.57" y="801.67" width="1.745" height="34.42" fill="#a2f0ff"/><rect x="1447.57" y="705.31" width="4.0" height="96.36" fill="#2181c1"/><rect x="1451.57" y="705.31" width="1.745" height="96.36" fill="#90ecfc"/><rect x="1447.57" y="505.70" width="4.0" height="199.61" fill="#ebc766"/><rect x="1451.57" y="505.70" width="1.745" height="199.61" fill="#fdeea0"/><rect x="1453.31" y="836.09" width="4.0" height="34.41" fill="#a2cee9"/><rect x="1457.31" y="836.09" width="1.745" height="34.41" fill="#d6f8ff"/><rect x="1453.31" y="801.67" width="4.0" height="34.42" fill="#43a5d6"/><rect x="1457.31" y="801.67" width="1.745" height="34.42" fill="#a2f0ff"/><rect x="1453.31" y="698.42" width="4.0" height="103.25" fill="#2181c1"/><rect x="1457.31" y="698.42" width="1.745" height="103.25" fill="#90ecfc"/><rect x="1453.31" y="505.70" width="4.0" height="192.72" fill="#ebc766"/><rect x="1457.31" y="505.70" width="1.745" height="192.72" fill="#fdeea0"/><rect x="1459.06" y="836.09" width="4.0" height="34.41" fill="#a2cee9"/><rect x="1463.06" y="836.09" width="1.745" height="34.41" fill="#d6f8ff"/><rect x="1459.06" y="801.67" width="4.0" height="34.42" fill="#43a5d6"/><rect x="1463.06" y="801.67" width="1.745" height="34.42" fill="#a2f0ff"/><rect x="1459.06" y="705.31" width="4.0" height="96.36" fill="#2181c1"/><rect x="1463.06" y="705.31" width="1.745" height="96.36" fill="#90ecfc"/><rect x="1459.06" y="505.70" width="4.0" height="199.61" fill="#ebc766"/><rect x="1463.06" y="505.70" width="1.745" height="199.61" fill="#fdeea0"/><rect x="1464.80" y="836.09" width="4.0" height="34.41" fill="#a2cee9"/><rect x="1468.80" y="836.09" width="1.745" height="34.41" fill="#d6f8ff"/><rect x="1464.80" y="808.55" width="4.0" height="27.53" fill="#43a5d6"/><rect x="1468.80" y="808.55" width="1.745" height="27.53" fill="#a2f0ff"/><rect x="1464.80" y="698.42" width="4.0" height="110.13" fill="#2181c1"/><rect x="1468.80" y="698.42" width="1.745" height="110.13" fill="#90ecfc"/><rect x="1464.80" y="505.70" width="4.0" height="192.72" fill="#ebc766"/><rect x="1468.80" y="505.70" width="1.745" height="192.72" fill="#fdeea0"/><rect x="1470.55" y="836.09" width="4.0" height="34.41" fill="#a2cee9"/><rect x="1474.55" y="836.09" width="1.745" height="34.41" fill="#d6f8ff"/><rect x="1470.55" y="808.55" width="4.0" height="27.53" fill="#43a5d6"/><rect x="1474.55" y="808.55" width="1.745" height="27.53" fill="#a2f0ff"/><rect x="1470.55" y="712.19" width="4.0" height="96.36" fill="#2181c1"/><rect x="1474.55" y="712.19" width="1.745" height="96.36" fill="#90ecfc"/><rect x="1470.55" y="505.70" width="4.0" height="206.49" fill="#ebc766"/><rect x="1474.55" y="505.70" width="1.745" height="206.49" fill="#fdeea0"/><rect x="1476.29" y="836.09" width="4.0" height="34.41" fill="#a2cee9"/><rect x="1480.29" y="836.09" width="1.745" height="34.41" fill="#d6f8ff"/><rect x="1476.29" y="808.55" width="4.0" height="27.53" fill="#43a5d6"/><rect x="1480.29" y="808.55" width="1.745" height="27.53" fill="#a2f0ff"/><rect x="1476.29" y="705.31" width="4.0" height="103.25" fill="#2181c1"/><rect x="1480.29" y="705.31" width="1.745" height="103.25" fill="#90ecfc"/><rect x="1476.29" y="505.70" width="4.0" height="199.61" fill="#ebc766"/><rect x="1480.29" y="505.70" width="1.745" height="199.61" fill="#fdeea0"/><rect x="1482.03" y="836.09" width="4.0" height="34.41" fill="#a2cee9"/><rect x="1486.03" y="836.09" width="1.745" height="34.41" fill="#d6f8ff"/><rect x="1482.03" y="801.67" width="4.0" height="34.42" fill="#43a5d6"/><rect x="1486.03" y="801.67" width="1.745" height="34.42" fill="#a2f0ff"/><rect x="1482.03" y="698.42" width="4.0" height="103.25" fill="#2181c1"/><rect x="1486.03" y="698.42" width="1.745" height="103.25" fill="#90ecfc"/><rect x="1482.03" y="505.70" width="4.0" height="192.72" fill="#ebc766"/><rect x="1486.03" y="505.70" width="1.745" height="192.72" fill="#fdeea0"/><rect x="1487.78" y="836.09" width="4.0" height="34.41" fill="#a2cee9"/><rect x="1491.78" y="836.09" width="1.745" height="34.41" fill="#d6f8ff"/><rect x="1487.78" y="794.79" width="4.0" height="41.30" fill="#43a5d6"/><rect x="1491.78" y="794.79" width="1.745" height="41.30" fill="#a2f0ff"/><rect x="1487.78" y="691.54" width="4.0" height="103.25" fill="#2181c1"/><rect x="1491.78" y="691.54" width="1.745" height="103.25" fill="#90ecfc"/><rect x="1487.78" y="498.82" width="4.0" height="192.72" fill="#ebc766"/><rect x="1491.78" y="498.82" width="1.745" height="192.72" fill="#fdeea0"/><rect x="1493.53" y="836.09" width="4.0" height="34.41" fill="#a2cee9"/><rect x="1497.53" y="836.09" width="1.745" height="34.41" fill="#d6f8ff"/><rect x="1493.53" y="801.67" width="4.0" height="34.42" fill="#43a5d6"/><rect x="1497.53" y="801.67" width="1.745" height="34.42" fill="#a2f0ff"/><rect x="1493.53" y="698.42" width="4.0" height="103.25" fill="#2181c1"/><rect x="1497.53" y="698.42" width="1.745" height="103.25" fill="#90ecfc"/><rect x="1493.53" y="505.70" width="4.0" height="192.72" fill="#ebc766"/><rect x="1497.53" y="505.70" width="1.745" height="192.72" fill="#fdeea0"/><rect x="1499.27" y="836.09" width="4.0" height="34.41" fill="#a2cee9"/><rect x="1503.27" y="836.09" width="1.745" height="34.41" fill="#d6f8ff"/><rect x="1499.27" y="801.67" width="4.0" height="34.42" fill="#43a5d6"/><rect x="1503.27" y="801.67" width="1.745" height="34.42" fill="#a2f0ff"/><rect x="1499.27" y="712.19" width="4.0" height="89.48" fill="#2181c1"/><rect x="1503.27" y="712.19" width="1.745" height="89.48" fill="#90ecfc"/><rect x="1499.27" y="505.70" width="4.0" height="206.49" fill="#ebc766"/><rect x="1503.27" y="505.70" width="1.745" height="206.49" fill="#fdeea0"/><rect x="1505.01" y="836.09" width="4.0" height="34.41" fill="#a2cee9"/><rect x="1509.01" y="836.09" width="1.745" height="34.41" fill="#d6f8ff"/><rect x="1505.01" y="801.67" width="4.0" height="34.42" fill="#43a5d6"/><rect x="1509.01" y="801.67" width="1.745" height="34.42" fill="#a2f0ff"/><rect x="1505.01" y="691.54" width="4.0" height="110.13" fill="#2181c1"/><rect x="1509.01" y="691.54" width="1.745" height="110.13" fill="#90ecfc"/><rect x="1505.01" y="505.70" width="4.0" height="185.84" fill="#ebc766"/><rect x="1509.01" y="505.70" width="1.745" height="185.84" fill="#fdeea0"/><rect x="1510.76" y="836.09" width="4.0" height="34.41" fill="#a2cee9"/><rect x="1514.76" y="836.09" width="1.745" height="34.41" fill="#d6f8ff"/><rect x="1510.76" y="794.79" width="4.0" height="41.30" fill="#43a5d6"/><rect x="1514.76" y="794.79" width="1.745" height="41.30" fill="#a2f0ff"/><rect x="1510.76" y="698.42" width="4.0" height="96.36" fill="#2181c1"/><rect x="1514.76" y="698.42" width="1.745" height="96.36" fill="#90ecfc"/><rect x="1510.76" y="505.70" width="4.0" height="192.72" fill="#ebc766"/><rect x="1514.76" y="505.70" width="1.745" height="192.72" fill="#fdeea0"/><rect x="1516.51" y="836.09" width="4.0" height="34.41" fill="#a2cee9"/><rect x="1520.51" y="836.09" width="1.745" height="34.41" fill="#d6f8ff"/><rect x="1516.51" y="801.67" width="4.0" height="34.42" fill="#43a5d6"/><rect x="1520.51" y="801.67" width="1.745" height="34.42" fill="#a2f0ff"/><rect x="1516.51" y="705.31" width="4.0" height="96.36" fill="#2181c1"/><rect x="1520.51" y="705.31" width="1.745" height="96.36" fill="#90ecfc"/><rect x="1516.51" y="505.70" width="4.0" height="199.61" fill="#ebc766"/><rect x="1520.51" y="505.70" width="1.745" height="199.61" fill="#fdeea0"/><rect x="1522.25" y="836.09" width="4.0" height="34.41" fill="#a2cee9"/><rect x="1526.25" y="836.09" width="1.745" height="34.41" fill="#d6f8ff"/><rect x="1522.25" y="808.55" width="4.0" height="27.53" fill="#43a5d6"/><rect x="1526.25" y="808.55" width="1.745" height="27.53" fill="#a2f0ff"/><rect x="1522.25" y="698.42" width="4.0" height="110.13" fill="#2181c1"/><rect x="1526.25" y="698.42" width="1.745" height="110.13" fill="#90ecfc"/><rect x="1522.25" y="505.70" width="4.0" height="192.72" fill="#ebc766"/><rect x="1526.25" y="505.70" width="1.745" height="192.72" fill="#fdeea0"/><rect x="1527.99" y="836.09" width="4.0" height="34.41" fill="#a2cee9"/><rect x="1531.99" y="836.09" width="1.745" height="34.41" fill="#d6f8ff"/><rect x="1527.99" y="808.55" width="4.0" height="27.53" fill="#43a5d6"/><rect x="1531.99" y="808.55" width="1.745" height="27.53" fill="#a2f0ff"/><rect x="1527.99" y="698.42" width="4.0" height="110.13" fill="#2181c1"/><rect x="1531.99" y="698.42" width="1.745" height="110.13" fill="#90ecfc"/><rect x="1527.99" y="505.70" width="4.0" height="192.72" fill="#ebc766"/><rect x="1531.99" y="505.70" width="1.745" height="192.72" fill="#fdeea0"/><rect x="1533.74" y="836.09" width="4.0" height="34.41" fill="#a2cee9"/><rect x="1537.74" y="836.09" width="1.745" height="34.41" fill="#d6f8ff"/><rect x="1533.74" y="801.67" width="4.0" height="34.42" fill="#43a5d6"/><rect x="1537.74" y="801.67" width="1.745" height="34.42" fill="#a2f0ff"/><rect x="1533.74" y="698.42" width="4.0" height="103.25" fill="#2181c1"/><rect x="1537.74" y="698.42" width="1.745" height="103.25" fill="#90ecfc"/><rect x="1533.74" y="505.70" width="4.0" height="192.72" fill="#ebc766"/><rect x="1537.74" y="505.70" width="1.745" height="192.72" fill="#fdeea0"/><rect x="1539.49" y="836.09" width="4.0" height="34.41" fill="#a2cee9"/><rect x="1543.49" y="836.09" width="1.745" height="34.41" fill="#d6f8ff"/><rect x="1539.49" y="808.55" width="4.0" height="27.53" fill="#43a5d6"/><rect x="1543.49" y="808.55" width="1.745" height="27.53" fill="#a2f0ff"/><rect x="1539.49" y="705.31" width="4.0" height="103.25" fill="#2181c1"/><rect x="1543.49" y="705.31" width="1.745" height="103.25" fill="#90ecfc"/><rect x="1539.49" y="505.70" width="4.0" height="199.61" fill="#ebc766"/><rect x="1543.49" y="505.70" width="1.745" height="199.61" fill="#fdeea0"/><rect x="1545.23" y="836.09" width="4.0" height="34.41" fill="#a2cee9"/><rect x="1549.23" y="836.09" width="1.745" height="34.41" fill="#d6f8ff"/><rect x="1545.23" y="801.67" width="4.0" height="34.42" fill="#43a5d6"/><rect x="1549.23" y="801.67" width="1.745" height="34.42" fill="#a2f0ff"/><rect x="1545.23" y="712.19" width="4.0" height="89.48" fill="#2181c1"/><rect x="1549.23" y="712.19" width="1.745" height="89.48" fill="#90ecfc"/><rect x="1545.23" y="505.70" width="4.0" height="206.49" fill="#ebc766"/><rect x="1549.23" y="505.70" width="1.745" height="206.49" fill="#fdeea0"/><rect x="1550.97" y="836.09" width="4.0" height="34.41" fill="#a2cee9"/><rect x="1550.97" y="801.67" width="4.0" height="34.42" fill="#43a5d6"/><rect x="1550.97" y="705.31" width="4.0" height="96.36" fill="#2181c1"/><rect x="1550.97" y="505.70" width="4.0" height="199.61" fill="#ebc766"/><rect x="660.5" y="766.65" width="895" height="1.2" fill="#000" fill-opacity="0.045"/><rect x="660.5" y="663.41" width="895" height="1.2" fill="#000" fill-opacity="0.045"/><rect x="660.5" y="560.16" width="895" height="1.2" fill="#000" fill-opacity="0.045"/></svg>
<div class="t" style="left:7.30px;top:18.38px;font-size:27.43px;color:#17191f;transform:scaleX(1.0494);transform-origin:0 0;-webkit-text-stroke:0.75px #17191f;">Position Tracking:</div>
<div class="t" style="left:243.36px;top:18.38px;font-size:27.43px;color:#1e5f9c;transform:scaleX(1.0534);transform-origin:0 0;-webkit-text-stroke:0.75px #1e5f9c;">voetranquilo.com</div>
<svg class="a" style="left:470px;top:26px" width="18" height="14" viewBox="0 0 18 14"><path d="M3.4 5.3 L8.5 10.4 L13.6 5.3" fill="none" stroke="#1e5f9c" stroke-width="2.7" stroke-linecap="round" stroke-linejoin="round"/></svg>
<svg class="a" style="left:1157px;top:21px" width="24" height="22" viewBox="0 0 24 22"><rect x="10.8" y="2.6" width="10.8" height="4.1" rx="2.05" fill="#3a76d6"/><rect x="2.2" y="9" width="11" height="4.2" rx="2.1" fill="#3a76d6"/><rect x="10.3" y="15.7" width="11.3" height="4.1" rx="2.05" fill="#3a76d6"/></svg>
<div class="t" style="left:1190.73px;top:23.99px;font-size:17.73px;color:#6b6e77;transform:scaleX(1.0991);transform-origin:0 0;">Google Data Studio</div>
<div class="t" style="left:1394.77px;top:23.14px;font-size:18.02px;color:#6b6e77;transform:scaleX(0.9916);transform-origin:0 0;">PDF</div>
<svg class="a" style="left:1465px;top:21px" width="22" height="23" viewBox="0 0 22 23"><path d="M10.4 1.4 V3.6" stroke="#5d5f66" stroke-width="2.1" stroke-linecap="round"/><path d="M5.3 16 V10.3 A5.1 5.7 0 0 1 15.5 10.3 V16" fill="none" stroke="#5d5f66" stroke-width="2.1"/><path d="M2.5 16.6 H18.3" stroke="#5d5f66" stroke-width="2.6" stroke-linecap="round"/><path d="M8.1 19.8 H12.9 Q12.1 21.9 10.5 21.9 Q8.9 21.9 8.1 19.8 Z" fill="#5d5f66"/></svg>
<div class="a" style="left:1496.6px;top:21.9px;width:29.5px;height:21.3px;border-radius:11px;background:#179a7b;"></div>
<div class="t" style="left:1503.06px;top:25.50px;font-size:13.59px;color:#ffffff;font-weight:700;transform:scaleX(1.0741);transform-origin:0 0;">55</div>
<svg class="a" style="left:1559.4px;top:21.3px" width="22" height="22" viewBox="0 0 22 22"><path d="M20.45 11.00 L20.44 11.25 L20.42 11.49 L20.37 11.74 L20.29 11.98 L20.11 12.20 L19.77 12.39 L19.20 12.52 L18.50 12.59 L17.92 12.66 L17.58 12.76 L17.39 12.89 L17.27 13.04 L17.19 13.19 L17.12 13.35 L17.05 13.51 L16.99 13.67 L16.93 13.83 L16.88 13.99 L16.86 14.18 L16.90 14.41 L17.07 14.72 L17.43 15.17 L17.87 15.72 L18.18 16.22 L18.29 16.59 L18.26 16.88 L18.15 17.11 L18.01 17.31 L17.85 17.50 L17.68 17.68 L17.50 17.85 L17.31 18.01 L17.11 18.15 L16.88 18.26 L16.59 18.29 L16.22 18.18 L15.72 17.87 L15.17 17.43 L14.72 17.07 L14.41 16.90 L14.18 16.86 L13.99 16.88 L13.83 16.93 L13.67 16.99 L13.51 17.05 L13.35 17.12 L13.19 17.19 L13.04 17.27 L12.89 17.39 L12.76 17.58 L12.66 17.92 L12.59 18.50 L12.52 19.20 L12.39 19.77 L12.20 20.11 L11.98 20.29 L11.74 20.37 L11.49 20.42 L11.25 20.44 L11.00 20.45 L10.75 20.44 L10.51 20.42 L10.26 20.37 L10.02 20.29 L9.80 20.11 L9.61 19.77 L9.48 19.20 L9.41 18.50 L9.34 17.92 L9.24 17.58 L9.11 17.39 L8.96 17.27 L8.81 17.19 L8.65 17.12 L8.49 17.05 L8.33 16.99 L8.17 16.93 L8.01 16.88 L7.82 16.86 L7.59 16.90 L7.28 17.07 L6.83 17.43 L6.28 17.87 L5.78 18.18 L5.41 18.29 L5.12 18.26 L4.89 18.15 L4.69 18.01 L4.50 17.85 L4.32 17.68 L4.15 17.50 L3.99 17.31 L3.85 17.11 L3.74 16.88 L3.71 16.59 L3.82 16.22 L4.13 15.72 L4.57 15.17 L4.93 14.72 L5.10 14.41 L5.14 14.18 L5.12 13.99 L5.07 13.83 L5.01 13.67 L4.95 13.51 L4.88 13.35 L4.81 13.19 L4.73 13.04 L4.61 12.89 L4.42 12.76 L4.08 12.66 L3.50 12.59 L2.80 12.52 L2.23 12.39 L1.89 12.20 L1.71 11.98 L1.63 11.74 L1.58 11.49 L1.56 11.25 L1.55 11.00 L1.56 10.75 L1.58 10.51 L1.63 10.26 L1.71 10.02 L1.89 9.80 L2.23 9.61 L2.80 9.48 L3.50 9.41 L4.08 9.34 L4.42 9.24 L4.61 9.11 L4.73 8.96 L4.81 8.81 L4.88 8.65 L4.95 8.49 L5.01 8.33 L5.07 8.17 L5.12 8.01 L5.14 7.82 L5.10 7.59 L4.93 7.28 L4.57 6.83 L4.13 6.28 L3.82 5.78 L3.71 5.41 L3.74 5.12 L3.85 4.89 L3.99 4.69 L4.15 4.50 L4.32 4.32 L4.50 4.15 L4.69 3.99 L4.89 3.85 L5.12 3.74 L5.41 3.71 L5.78 3.82 L6.28 4.13 L6.83 4.57 L7.28 4.93 L7.59 5.10 L7.82 5.14 L8.01 5.12 L8.17 5.07 L8.33 5.01 L8.49 4.95 L8.65 4.88 L8.81 4.81 L8.96 4.73 L9.11 4.61 L9.24 4.42 L9.34 4.08 L9.41 3.50 L9.48 2.80 L9.61 2.23 L9.80 1.89 L10.02 1.71 L10.26 1.63 L10.51 1.58 L10.75 1.56 L11.00 1.55 L11.25 1.56 L11.49 1.58 L11.74 1.63 L11.98 1.71 L12.20 1.89 L12.39 2.23 L12.52 2.80 L12.59 3.50 L12.66 4.08 L12.76 4.42 L12.89 4.61 L13.04 4.73 L13.19 4.81 L13.35 4.88 L13.51 4.95 L13.67 5.01 L13.83 5.07 L13.99 5.12 L14.18 5.14 L14.41 5.10 L14.72 4.93 L15.17 4.57 L15.72 4.13 L16.22 3.82 L16.59 3.71 L16.88 3.74 L17.11 3.85 L17.31 3.99 L17.50 4.15 L17.68 4.32 L17.85 4.50 L18.01 4.69 L18.15 4.89 L18.26 5.12 L18.29 5.41 L18.18 5.78 L17.87 6.28 L17.43 6.83 L17.07 7.28 L16.90 7.59 L16.86 7.82 L16.88 8.01 L16.93 8.17 L16.99 8.33 L17.05 8.49 L17.12 8.65 L17.19 8.81 L17.27 8.96 L17.39 9.11 L17.58 9.24 L17.92 9.34 L18.50 9.41 L19.20 9.48 L19.77 9.61 L20.11 9.80 L20.29 10.02 L20.37 10.26 L20.42 10.51 L20.44 10.75 Z" fill="none" stroke="#5f626a" stroke-width="2" stroke-linejoin="round"/><circle cx="11" cy="11" r="2.75" fill="none" stroke="#5f626a" stroke-width="2"/></svg>
<svg class="a" style="left:8px;top:66px" width="20" height="19" viewBox="0 0 20 19"><rect x="1.7" y="1.5" width="15.5" height="11" rx="1.6" fill="none" stroke="#215d93" stroke-width="2.3"/><path d="M7.6 14.2 L9.6 13.2 L11.6 14.2 Z" fill="#215d93"/><rect x="4.8" y="16.1" width="9.5" height="1.8" rx="0.8" fill="#215d93"/></svg>
<div class="t" style="left:32.78px;top:64.60px;font-size:18.31px;color:#2f6198;transform:scaleX(1.0734);transform-origin:0 0;">Brazil • Portuguese (Brazil)</div>
<svg class="a" style="left:276px;top:70px" width="17" height="12" viewBox="0 0 17 12"><path d="M3.3 3.6 L8.5 8.6 L13.7 3.6" fill="none" stroke="#215d93" stroke-width="2.6" stroke-linecap="round" stroke-linejoin="round"/></svg>
<div class="t" style="left:326.02px;top:64.78px;font-size:19.04px;color:#22252b;transform:scaleX(1.0332);transform-origin:0 0;">Updated: 3 hours ago</div>
<div class="t" style="left:546.85px;top:64.78px;font-size:19.04px;color:#22252b;transform:scaleX(1.0186);transform-origin:0 0;">Keywords: <span style="color:#2f6a9c">55</span></div>
<div class="t" style="left:695.90px;top:64.78px;font-size:19.04px;color:#22252b;transform:scaleX(1.0463);transform-origin:0 0;">Competitors: <span style="color:#2f6a9c">6</span></div>
<div class="t" style="left:856.90px;top:64.78px;font-size:19.04px;color:#22252b;transform:scaleX(1.0456);transform-origin:0 0;">Google 3-pack:</div>
<svg class="a" style="left:996px;top:63px" width="22" height="23" viewBox="0 0 22 23"><path d="M10.9 20.3 C10.9 20.3 3.6 14.6 3.6 9.6 A7.3 7.3 0 0 1 18.2 9.6 C18.2 14.6 10.9 20.3 10.9 20.3 Z" fill="none" stroke="#1f5f9a" stroke-width="2.6" stroke-linejoin="round"/><circle cx="10.9" cy="10.3" r="2.5" fill="#1f5f9a"/></svg>
<svg class="a" style="left:1026px;top:64px" width="24" height="22" viewBox="0 0 24 22"><path d="M3.4 19.2 V14.6 H7.7 V8.4 H17.4 V14.6 H21.3 V19.2 Z M7.7 14.6 V19.2 M17.4 14.6 V19.2" fill="none" stroke="#1f5f9a" stroke-width="2.4" stroke-linejoin="round"/><path d="M10.2 12.2 H14.2 M12.2 15.4 V19" fill="none" stroke="#1f5f9a" stroke-width="1.9"/><circle cx="7.1" cy="3.4" r="1.25" fill="#1f5f9a"/><circle cx="12.4" cy="2.9" r="1.25" fill="#1f5f9a"/><circle cx="17.9" cy="3.4" r="1.25" fill="#1f5f9a"/></svg>
<svg class="a" style="left:1056px;top:70px" width="17" height="12" viewBox="0 0 17 12"><path d="M3.7 4 L8.65 8.4 L13.6 4" fill="none" stroke="#1f5f9a" stroke-width="2.7" stroke-linecap="round" stroke-linejoin="round"/></svg>
<div class="t" style="left:1107.03px;top:64.78px;font-size:19.04px;color:#22252b;transform:scaleX(1.0127);transform-origin:0 0;">Share of Voice</div>
<div class="a" style="left:1243px;top:68.4px;width:26.4px;height:15.6px;border-radius:8px;background:#a3a5ad;"></div>
<div class="a" style="left:1245.4px;top:70.8px;width:10.8px;height:10.8px;border-radius:6px;background:#fff;"></div>
<div class="t" style="left:4.14px;top:119.01px;font-size:18.90px;color:#22252b;transform:scaleX(1.0329);transform-origin:0 0;">Landscape</div>
<div class="t" style="left:120.33px;top:119.01px;font-size:18.90px;color:#22252b;transform:scaleX(1.0238);transform-origin:0 0;">Overview</div>
<div class="t" style="left:223.44px;top:119.01px;font-size:18.90px;color:#22252b;transform:scaleX(1.0317);transform-origin:0 0;">Rankings Distribution</div>
<div class="t" style="left:429.62px;top:119.01px;font-size:18.90px;color:#22252b;transform:scaleX(1.0173);transform-origin:0 0;">Tags</div>
<div class="t" style="left:490.46px;top:119.01px;font-size:18.90px;color:#22252b;transform:scaleX(1.0166);transform-origin:0 0;">Pages</div>
<div class="t" style="left:565.27px;top:119.01px;font-size:18.90px;color:#22252b;transform:scaleX(1.0396);transform-origin:0 0;">Cannibalization</div>
<div class="t" style="left:720.02px;top:119.01px;font-size:18.90px;color:#22252b;transform:scaleX(1.0389);transform-origin:0 0;">Competitors Discovery</div>
<div class="t" style="left:939.45px;top:119.01px;font-size:18.90px;color:#22252b;transform:scaleX(1.0247);transform-origin:0 0;">Devices &amp; Locations</div>
<div class="t" style="left:1135.70px;top:119.01px;font-size:18.90px;color:#22252b;transform:scaleX(1.0279);transform-origin:0 0;">Featured Snippets</div>
<div class="a" style="left:4.5px;top:145.2px;width:94.5px;height:2.6px;background:#2273b2;"></div>
<div class="t" style="left:17.15px;top:177.79px;font-size:18.68px;color:#22252b;transform:scaleX(1.0513);transform-origin:0 0;">voetranquilo.com</div>
<svg class="a" style="left:185px;top:179px" width="17" height="17" viewBox="0 0 17 17"><path d="M3.2 3.2 L13.8 13.8 M13.8 3.2 L3.2 13.8" stroke="#1b1d22" stroke-width="2.7" stroke-linecap="square"/></svg>
<svg class="a" style="left:1296px;top:177px" width="21" height="20" viewBox="0 0 21 20"><rect x="2" y="4.6" width="16.5" height="13.8" fill="none" stroke="#62656d" stroke-width="2.2"/><line x1="2" y1="9.9" x2="18.5" y2="9.9" stroke="#62656d" stroke-width="2"/><line x1="6.2" y1="0.8" x2="6.2" y2="5.5" stroke="#62656d" stroke-width="2.2"/><line x1="13.7" y1="0.8" x2="13.7" y2="5.5" stroke="#62656d" stroke-width="2.2"/></svg>
<div class="t" style="left:1327.22px;top:178.17px;font-size:18.46px;color:#62656d;transform:scaleX(1.0700);transform-origin:0 0;">May 27, 2020 - May 20, 2022</div>
<div class="t" style="left:31.60px;top:250.74px;font-size:19.33px;color:#22252b;transform:scaleX(1.0130);transform-origin:0 0;">Visibility</div>
<svg class="a" style="left:113.20px;top:251.90px" width="12" height="18" viewBox="0 0 12 18"><circle cx="6" cy="3" r="1.95" fill="#a7aaaf"/><path d="M1.7 7.4 H5.3 L4.1 15.5 M3.0 15.6 H8.6" fill="none" stroke="#a7aaaf" stroke-width="2.2"/></svg>
<div class="t" style="left:31.49px;top:281.35px;font-size:33.14px;color:#1f88d6;font-weight:700;transform:scaleX(1.0280);transform-origin:0 0;">42.28%</div>
<div class="t" style="left:155.20px;top:295.17px;font-size:16.57px;color:#458a6c;transform:scaleX(0.9634);transform-origin:0 0;">+34.77%</div>
<div class="t" style="left:567.60px;top:250.74px;font-size:19.33px;color:#22252b;transform:scaleX(1.0332);transform-origin:0 0;">Estimated Traffic</div>
<svg class="a" style="left:726.60px;top:252.00px" width="12" height="18" viewBox="0 0 12 18"><circle cx="6" cy="3" r="1.95" fill="#a7aaaf"/><path d="M1.7 7.4 H5.3 L4.1 15.5 M3.0 15.6 H8.6" fill="none" stroke="#a7aaaf" stroke-width="2.2"/></svg>
<div class="t" style="left:568.34px;top:281.35px;font-size:33.14px;color:#1f88d6;font-weight:700;transform:scaleX(1.0042);transform-origin:0 0;">61.57</div>
<div class="t" style="left:657.65px;top:295.83px;font-size:15.55px;color:#458a6c;transform:scaleX(1.0885);transform-origin:0 0;">+54.35</div>
<div class="t" style="left:1106.50px;top:250.74px;font-size:19.33px;color:#22252b;transform:scaleX(0.9944);transform-origin:0 0;">Average Position</div>
<svg class="a" style="left:1261.60px;top:252.00px" width="12" height="18" viewBox="0 0 12 18"><circle cx="6" cy="3" r="1.95" fill="#a7aaaf"/><path d="M1.7 7.4 H5.3 L4.1 15.5 M3.0 15.6 H8.6" fill="none" stroke="#a7aaaf" stroke-width="2.2"/></svg>
<div class="t" style="left:1104.48px;top:281.35px;font-size:33.14px;color:#1f88d6;font-weight:700;transform:scaleX(1.0163);transform-origin:0 0;">10.73</div>
<svg class="a" style="left:1196px;top:295px" width="12" height="16" viewBox="0 0 12 16"><path d="M6 15 L6 2.5 M1.8 6.7 L6 2.5 L10.2 6.7" fill="none" stroke="#3e8d67" stroke-width="1.7" stroke-linecap="round" stroke-linejoin="round"/></svg>
<div class="t" style="left:1212.15px;top:295.83px;font-size:15.55px;color:#458a6c;transform:scaleX(1.0885);transform-origin:0 0;">28.03</div>
<div class="t" style="left:29.80px;top:379.02px;font-size:21.00px;color:#17191f;font-weight:700;transform:scaleX(1.0267);transform-origin:0 0;">Keywords</div>
<svg class="a" style="left:143.30px;top:381.10px" width="12" height="18" viewBox="0 0 12 18"><circle cx="6" cy="3" r="1.95" fill="#a7aaaf"/><path d="M1.7 7.4 H5.3 L4.1 15.5 M3.0 15.6 H8.6" fill="none" stroke="#a7aaaf" stroke-width="2.2"/></svg>
<div class="t" style="left:31.51px;top:447.17px;font-size:18.46px;color:#22252b;transform:scaleX(1.0676);transform-origin:0 0;">Top 3</div>
<svg class="a" style="left:29.3px;top:471.2px" width="34" height="34" viewBox="0 0 34 34"><circle cx="17" cy="17" r="13.45" fill="none" stroke="#c8cacf" stroke-width="4.9"/><circle cx="17" cy="17" r="13.45" fill="none" stroke="#3ea6e6" stroke-width="4.9" stroke-dasharray="44.56 84.51" transform="rotate(-90 17 17)"/></svg>
<div class="t" style="left:73.24px;top:472.33px;font-size:31.98px;color:#1f88d6;font-weight:700;transform:scaleX(1.1246);transform-origin:0 0;">29</div>
<div class="t" style="left:150.87px;top:472.77px;font-size:14.10px;color:#22252b;transform:scaleX(1.1791);transform-origin:0 0;">New</div>
<div class="t" style="left:200.67px;top:472.77px;font-size:14.10px;color:#22252b;transform:scaleX(1.1782);transform-origin:0 0;">Lost</div>
<div class="t" style="left:151.80px;top:490.70px;font-size:14.53px;color:#458a6c;transform:scaleX(1.0967);transform-origin:0 0;">27</div>
<div class="t" style="left:201.78px;top:490.70px;font-size:14.53px;color:#777a80;transform:scaleX(1.0750);transform-origin:0 0;">0</div>
<div class="t" style="left:31.52px;top:558.77px;font-size:18.46px;color:#22252b;transform:scaleX(1.0412);transform-origin:0 0;">Top 10</div>
<svg class="a" style="left:29.3px;top:582.8px" width="34" height="34" viewBox="0 0 34 34"><circle cx="17" cy="17" r="13.45" fill="none" stroke="#c8cacf" stroke-width="4.9"/><circle cx="17" cy="17" r="13.45" fill="none" stroke="#3ea6e6" stroke-width="4.9" stroke-dasharray="66.07 84.51" transform="rotate(-90 17 17)"/></svg>
<div class="t" style="left:73.24px;top:583.93px;font-size:31.98px;color:#1f88d6;font-weight:700;transform:scaleX(1.1246);transform-origin:0 0;">43</div>
<div class="t" style="left:150.87px;top:584.37px;font-size:14.10px;color:#22252b;transform:scaleX(1.1791);transform-origin:0 0;">New</div>
<div class="t" style="left:200.67px;top:584.37px;font-size:14.10px;color:#22252b;transform:scaleX(1.1782);transform-origin:0 0;">Lost</div>
<div class="t" style="left:151.80px;top:602.30px;font-size:14.53px;color:#458a6c;transform:scaleX(1.0967);transform-origin:0 0;">31</div>
<div class="t" style="left:201.78px;top:602.30px;font-size:14.53px;color:#777a80;transform:scaleX(1.0750);transform-origin:0 0;">0</div>
<div class="t" style="left:31.50px;top:670.37px;font-size:18.46px;color:#22252b;transform:scaleX(1.0816);transform-origin:0 0;">Top 20</div>
<svg class="a" style="left:29.3px;top:694.4px" width="34" height="34" viewBox="0 0 34 34"><circle cx="17" cy="17" r="13.45" fill="none" stroke="#c8cacf" stroke-width="4.9"/><circle cx="17" cy="17" r="13.45" fill="none" stroke="#3ea6e6" stroke-width="4.9" stroke-dasharray="73.75 84.51" transform="rotate(-90 17 17)"/></svg>
<div class="t" style="left:73.24px;top:695.53px;font-size:31.98px;color:#1f88d6;font-weight:700;transform:scaleX(1.1246);transform-origin:0 0;">48</div>
<div class="t" style="left:150.87px;top:695.97px;font-size:14.10px;color:#22252b;transform:scaleX(1.1791);transform-origin:0 0;">New</div>
<div class="t" style="left:200.67px;top:695.97px;font-size:14.10px;color:#22252b;transform:scaleX(1.1782);transform-origin:0 0;">Lost</div>
<div class="t" style="left:151.80px;top:713.90px;font-size:14.53px;color:#458a6c;transform:scaleX(1.0967);transform-origin:0 0;">23</div>
<div class="t" style="left:201.78px;top:713.90px;font-size:14.53px;color:#777a80;transform:scaleX(1.0750);transform-origin:0 0;">0</div>
<div class="t" style="left:31.52px;top:781.97px;font-size:18.46px;color:#22252b;transform:scaleX(1.0386);transform-origin:0 0;">Top 100</div>
<svg class="a" style="left:29.3px;top:806.0px" width="34" height="34" viewBox="0 0 34 34"><circle cx="17" cy="17" r="13.45" fill="none" stroke="#c8cacf" stroke-width="4.9"/><circle cx="17" cy="17" r="13.45" fill="none" stroke="#3ea6e6" stroke-width="4.9" stroke-dasharray="81.44 84.51" transform="rotate(-90 17 17)"/></svg>
<div class="t" style="left:73.24px;top:807.13px;font-size:31.98px;color:#1f88d6;font-weight:700;transform:scaleX(1.1246);transform-origin:0 0;">53</div>
<div class="t" style="left:150.87px;top:807.57px;font-size:14.10px;color:#22252b;transform:scaleX(1.1791);transform-origin:0 0;">New</div>
<div class="t" style="left:200.67px;top:807.57px;font-size:14.10px;color:#22252b;transform:scaleX(1.1782);transform-origin:0 0;">Lost</div>
<div class="t" style="left:151.80px;top:825.50px;font-size:14.53px;color:#458a6c;transform:scaleX(1.0967);transform-origin:0 0;">5</div>
<div class="t" style="left:201.78px;top:825.50px;font-size:14.53px;color:#777a80;transform:scaleX(1.0750);transform-origin:0 0;">0</div>
<div class="t" style="left:30.03px;top:893.62px;font-size:18.17px;color:#22252b;transform:scaleX(1.0841);transform-origin:0 0;">Improved vs. declined</div>
<div class="t" style="left:31.73px;top:925.16px;font-size:32.41px;color:#1a977a;font-weight:700;transform:scaleX(0.8978);transform-origin:0 0;">51</div>
<svg class="a" style="left:76px;top:921px" width="66" height="34" viewBox="0 0 66 34"><path d="M6.2 31 A26.4 26.4 0 0 1 59 31" fill="none" stroke="#1a977a" stroke-width="9.2"/></svg>
<div class="t" style="left:150.40px;top:925.16px;font-size:32.41px;color:#a3a5ad;font-weight:700;transform:scaleX(1.2341);transform-origin:0 0;">0</div>
<div class="t" style="left:567.61px;top:380.34px;font-size:20.86px;color:#17191f;font-weight:700;transform:scaleX(1.0276);transform-origin:0 0;">Rankings Distribution</div>
<svg class="a" style="left:800.30px;top:381.10px" width="12" height="18" viewBox="0 0 12 18"><circle cx="6" cy="3" r="1.95" fill="#a7aaaf"/><path d="M1.7 7.4 H5.3 L4.1 15.5 M3.0 15.6 H8.6" fill="none" stroke="#a7aaaf" stroke-width="2.2"/></svg>
<div class="t" style="left:628.79px;top:862.61px;font-size:15.70px;color:#6f7177;transform:scaleX(1.1281);transform-origin:0 0;">0</div>
<div class="t" style="left:618.64px;top:759.37px;font-size:15.70px;color:#6f7177;transform:scaleX(1.1524);transform-origin:0 0;">15</div>
<div class="t" style="left:619.30px;top:656.12px;font-size:15.70px;color:#6f7177;transform:scaleX(1.1079);transform-origin:0 0;">30</div>
<div class="t" style="left:619.66px;top:552.88px;font-size:15.70px;color:#6f7177;transform:scaleX(1.0921);transform-origin:0 0;">45</div>
<div class="t" style="left:619.12px;top:449.63px;font-size:15.70px;color:#6f7177;transform:scaleX(1.1187);transform-origin:0 0;">60</div>
<div class="t" style="left:588.4px;top:664px;font-size:19.2px;color:#75777d;transform:translate(-50%,-50%) rotate(-90deg);">Keywords</div>
<div class="a" style="left:660.5px;top:869.8px;width:894.5px;height:1.2px;background:#9fcfee;"></div>
<div class="t" style="left:701.50px;top:887.77px;font-size:15.99px;color:#6f7177;transform:scaleX(0.9823);transform-origin:0 0;">Aug 12</div>
<div class="t" style="left:775.42px;top:887.77px;font-size:15.99px;color:#6f7177;transform:scaleX(1.0024);transform-origin:0 0;">Nov 11</div>
<div class="t" style="left:847.34px;top:887.77px;font-size:15.99px;color:#6f7177;transform:scaleX(1.0608);transform-origin:0 0;">Feb 3</div>
<div class="t" style="left:909.50px;top:887.77px;font-size:15.99px;color:#6f7177;transform:scaleX(1.0094);transform-origin:0 0;">Apr 21</div>
<div class="t" style="left:978.55px;top:887.77px;font-size:15.99px;color:#6f7177;transform:scaleX(1.0338);transform-origin:0 0;">Jul 7</div>
<div class="t" style="left:1038.45px;top:887.77px;font-size:15.99px;color:#6f7177;transform:scaleX(1.0438);transform-origin:0 0;">Sep 29</div>
<div class="t" style="left:1106.86px;top:887.77px;font-size:15.99px;color:#6f7177;transform:scaleX(1.0469);transform-origin:0 0;">Dec 22</div>
<div class="t" style="left:1176.68px;top:887.77px;font-size:15.99px;color:#6f7177;transform:scaleX(1.0313);transform-origin:0 0;">Mar 16</div>
<div class="t" style="left:1253.50px;top:887.77px;font-size:15.99px;color:#6f7177;transform:scaleX(0.9735);transform-origin:0 0;">Apr 1</div>
<div class="t" style="left:1311.70px;top:887.77px;font-size:15.99px;color:#6f7177;">Apr 12</div>
<div class="t" style="left:1379.20px;top:887.77px;font-size:15.99px;color:#6f7177;transform:scaleX(1.0428);transform-origin:0 0;">Apr 24</div>
<div class="t" style="left:1448.92px;top:887.77px;font-size:15.99px;color:#6f7177;transform:scaleX(1.0825);transform-origin:0 0;">May 6</div>
<div class="a" style="left:1500px;top:880px;width:68.5px;height:26px;overflow:hidden;"><div class="a" style="left:-1500px;top:-880px;width:1600px;height:1002px;"><div class="t" style="left:1515.02px;top:887.77px;font-size:15.99px;color:#6f7177;transform:scaleX(1.0770);transform-origin:0 0;">May 20</div>
</div></div>
<div class="a" style="left:568.5px;top:947px;width:20.3px;height:20.3px;border-radius:5px;background:#f4bb3a;"></div>
<svg class="a" style="left:568.5px;top:947px" width="21" height="21" viewBox="0 0 21 21"><path d="M4.8 10.6 L8.4 13.8 L15.6 6.9" fill="none" stroke="#fff" stroke-width="2.6" stroke-linecap="round" stroke-linejoin="round"/></svg>
<div class="t" style="left:594.90px;top:947.72px;font-size:18.17px;color:#22252b;transform:scaleX(1.0712);transform-origin:0 0;"># 1-3</div>
<div class="a" style="left:661px;top:947px;width:20.3px;height:20.3px;border-radius:5px;background:#1a77d2;"></div>
<svg class="a" style="left:661px;top:947px" width="21" height="21" viewBox="0 0 21 21"><path d="M4.8 10.6 L8.4 13.8 L15.6 6.9" fill="none" stroke="#fff" stroke-width="2.6" stroke-linecap="round" stroke-linejoin="round"/></svg>
<div class="t" style="left:687.15px;top:947.72px;font-size:18.17px;color:#22252b;transform:scaleX(1.0998);transform-origin:0 0;"># 4-10</div>
<div class="a" style="left:765.5px;top:947px;width:20.3px;height:20.3px;border-radius:5px;background:#3aa5ea;"></div>
<svg class="a" style="left:765.5px;top:947px" width="21" height="21" viewBox="0 0 21 21"><path d="M4.8 10.6 L8.4 13.8 L15.6 6.9" fill="none" stroke="#fff" stroke-width="2.6" stroke-linecap="round" stroke-linejoin="round"/></svg>
<div class="t" style="left:791.60px;top:947.72px;font-size:18.17px;color:#22252b;transform:scaleX(1.0521);transform-origin:0 0;"># 11-20</div>
<div class="a" style="left:876.8px;top:947px;width:20.3px;height:20.3px;border-radius:5px;background:#98cdf4;"></div>
<svg class="a" style="left:876.8px;top:947px" width="21" height="21" viewBox="0 0 21 21"><path d="M4.8 10.6 L8.4 13.8 L15.6 6.9" fill="none" stroke="#fff" stroke-width="2.6" stroke-linecap="round" stroke-linejoin="round"/></svg>
<div class="t" style="left:902.90px;top:947.72px;font-size:18.17px;color:#22252b;transform:scaleX(1.0571);transform-origin:0 0;"># 21-100</div>
<div class="a" style="left:1001px;top:947px;width:20px;height:20.3px;border-radius:5px;background:#fff;border:1px solid #d0d2d8;box-sizing:border-box;"></div>
<div class="t" style="left:1025.91px;top:947.72px;font-size:18.17px;color:#22252b;transform:scaleX(1.0885);transform-origin:0 0;">Out of top 100</div>
<svg class="a" style="left:1520px;top:940px" width="80" height="62" viewBox="1520 940 80 62"><circle cx="1569.6" cy="988.6" r="39.2" fill="#f3632c"/><path d="M1561.3 982.2 A8.3 8.3 0 1 1 1576.0 987.3 Q1574.2 989.6 1571.6 991.3 Q1570.2 992.4 1570.2 995" fill="none" stroke="#fff6ef" stroke-width="5" stroke-linecap="round"/><circle cx="1570.2" cy="1003" r="2.8" fill="#fff6ef"/></svg>
<svg class="a" style="left:0;top:0" width="1600" height="8" viewBox="0 0 1600 8"><rect x="1036.8" y="-4" width="13" height="6.6" rx="2" fill="none" stroke="#1f5a8e" stroke-width="2.2"/><path d="M1198.5 0 Q1199.5 2.8 1203 2.8 Q1206.2 2.8 1206.8 0" fill="none" stroke="#55585f" stroke-width="1.5"/><path d="M1227.9 0 V3 M1238.9 0 V3" stroke="#55585f" stroke-width="1.5"/><path d="M1275 1 H1294" stroke="#1f5a8e" stroke-width="2.4"/><path d="M1283 2 L1285 3.6 L1287 2 Z" fill="#1f5a8e"/><path d="M1437.5 2.2 L1441 -1" stroke="#2a5060" stroke-width="1.8"/><path d="M331.5 0 L332.5 1.2" stroke="#555" stroke-width="1.2"/><path d="M591 0 Q593 1.6 596 0" fill="none" stroke="#333" stroke-width="1.4"/></svg>
</body></html>
